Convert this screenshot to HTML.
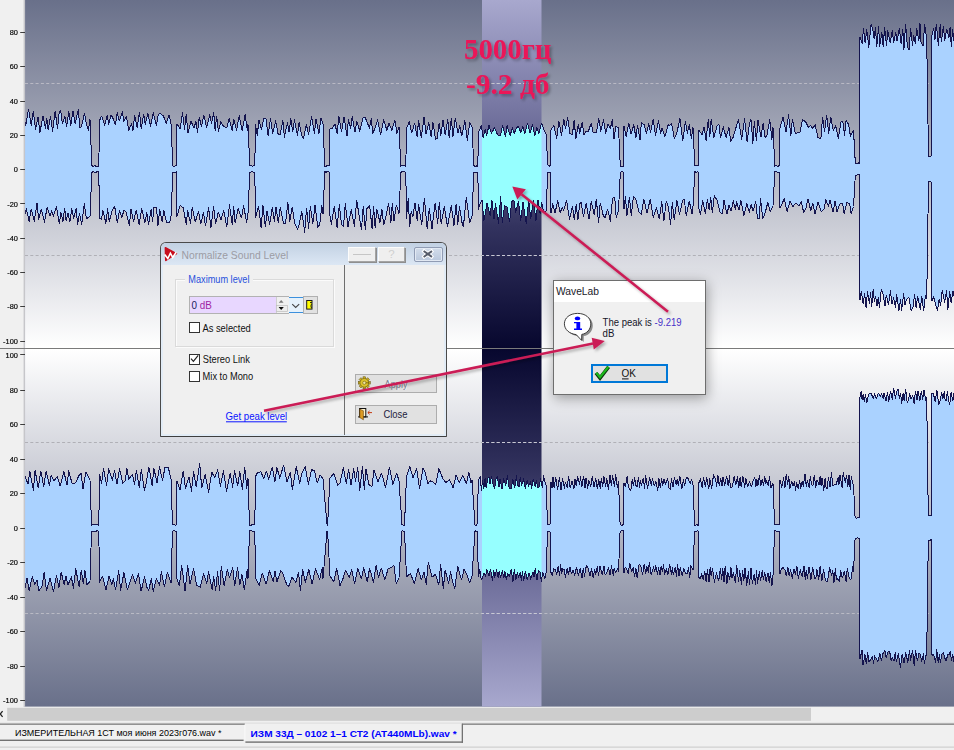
<!DOCTYPE html>
<html lang="ru">
<head>
<meta charset="utf-8">
<title>WaveLab</title>
<style>
*{box-sizing:border-box;margin:0;padding:0}
html,body{width:954px;height:750px;overflow:hidden;background:#f0f0f0}
body{position:relative;font-family:"Liberation Sans",sans-serif;font-size:11px;color:#000}
svg{position:absolute;left:0;top:0;overflow:visible}
svg text{font-family:"Liberation Sans",sans-serif;white-space:pre}
.abs{position:absolute}
#sbtrack{left:0;top:707px;width:954px;height:16px;background:#f0f0f0}
#sbthumb{left:10px;top:709px;width:801px;height:13px;background:#cdcdcd}
#tabbar{left:0;top:722px;width:954px;height:28px;background:#f0f0f0}
#tabline{left:0;top:722px;width:954px;height:2px;background:linear-gradient(#b4b4b4,#6e6e6e)}
#tab1{left:0;top:724px;width:243px;height:21px;border-bottom:2px solid #8a8a8a;border-right:1px solid #8a8a8a;background:#f0f0f0}
#tab2{left:245px;top:724px;width:218px;height:23px;border-bottom:2px solid #8a8a8a;border-right:2px solid #8a8a8a;border-left:1px solid #fff;background:#f0f0f0}
#botline{left:0;top:748px;width:954px;height:1px;background:#c8c8c8}
#dlg{left:160px;top:242px;width:287px;height:195px;border:1px solid #4a4a4a;border-bottom-color:#3e3e3e;border-radius:6px 6px 1px 1px;background:#e2ecf6}
#dlg .title{left:0;top:0;width:285px;height:22px;background:linear-gradient(#c2d1e3,#dce7f4);border-radius:5px 5px 0 0}
#dlg .body{left:2px;top:22px;width:281px;height:169px;background:#f0f0f0}
.tbtn{top:4px;height:15px;background:#efefef;border:1px solid;border-color:#fcfcfc #a4a4a4 #a4a4a4 #fcfcfc;box-shadow:1px 1px 0 #8e8e8e}
.grp{left:14px;top:36px;width:159px;height:68px;border:1px solid #dadada;box-shadow:1px 1px 0 #fbfbfb, inset 1px 1px 0 #fbfbfb}
.cb{width:11px;height:11px;border:1px solid #333;background:#fff}
.btn{background:#e1e1e1;border:1px solid #adadad}
</style>
</head>
<body>
<svg id="wave" width="954" height="750" viewBox="0 0 954 750">
<defs>
<linearGradient id="gT" x1="0" y1="0" x2="0" y2="1"><stop offset="0" stop-color="#69708a"/><stop offset="0.5" stop-color="#b4b7c4"/><stop offset="1" stop-color="#ffffff"/></linearGradient>
<linearGradient id="gB" x1="0" y1="0" x2="0" y2="1"><stop offset="0" stop-color="#ffffff"/><stop offset="0.5" stop-color="#b4b7c4"/><stop offset="1" stop-color="#69708a"/></linearGradient>
<linearGradient id="sT" x1="0" y1="0" x2="0" y2="1"><stop offset="0" stop-color="#a8a8ce"/><stop offset="0.35" stop-color="#70709c"/><stop offset="0.65" stop-color="#33335f"/><stop offset="1" stop-color="#07072e"/></linearGradient>
<linearGradient id="sB" x1="0" y1="0" x2="0" y2="1"><stop offset="0" stop-color="#07072e"/><stop offset="0.35" stop-color="#33335f"/><stop offset="0.65" stop-color="#70709c"/><stop offset="1" stop-color="#a8a8ce"/></linearGradient>
<clipPath id="cSel"><rect x="482" y="0" width="59.5" height="708"/></clipPath>
<clipPath id="cArea"><rect x="25" y="0" width="929" height="708"/></clipPath>
</defs>
<rect x="25" y="0" width="929" height="348" fill="url(#gT)"/>
<rect x="25" y="349" width="929" height="357.6" fill="url(#gB)"/>
<rect x="482" y="0" width="59.5" height="348" fill="url(#sT)"/>
<rect x="482" y="349" width="59.5" height="357.6" fill="url(#sB)"/>
<line x1="25" x2="954" y1="83.5" y2="83.5" stroke="#bcbcc6" stroke-width="1" stroke-dasharray="3 2.3" opacity="0.95"/>
<line x1="25" x2="954" y1="83.5" y2="83.5" stroke="#c8c8d4" stroke-width="1" stroke-dasharray="3 2.3" clip-path="url(#cSel)"/>
<line x1="25" x2="954" y1="255.5" y2="255.5" stroke="#aeaeb4" stroke-width="1" stroke-dasharray="3 2.3" opacity="0.95"/>
<line x1="25" x2="954" y1="255.5" y2="255.5" stroke="#c8c8d4" stroke-width="1" stroke-dasharray="3 2.3" clip-path="url(#cSel)"/>
<line x1="25" x2="954" y1="442.5" y2="442.5" stroke="#aeaeb4" stroke-width="1" stroke-dasharray="3 2.3" opacity="0.95"/>
<line x1="25" x2="954" y1="442.5" y2="442.5" stroke="#c8c8d4" stroke-width="1" stroke-dasharray="3 2.3" clip-path="url(#cSel)"/>
<line x1="25" x2="954" y1="613.5" y2="613.5" stroke="#bcbcc6" stroke-width="1" stroke-dasharray="3 2.3" opacity="0.95"/>
<line x1="25" x2="954" y1="613.5" y2="613.5" stroke="#c8c8d4" stroke-width="1" stroke-dasharray="3 2.3" clip-path="url(#cSel)"/>
<g clip-path="url(#cArea)">
<path d="M19.0 118.7 L21.9 123.9 L23.5 112.1 L25.6 126.0 L28.5 109.3 L31.3 125.2 L33.3 111.2 L35.6 129.6 L38.0 116.9 L39.9 132.5 L43.0 115.8 L45.4 128.5 L46.8 118.4 L48.2 130.1 L50.5 116.1 L52.6 131.7 L55.1 111.1 L57.6 128.8 L59.0 113.9 L60.7 110.0 L62.4 123.8 L64.9 116.8 L66.6 126.4 L68.8 111.4 L70.7 125.6 L73.0 111.3 L75.2 123.7 L78.3 109.5 L79.8 127.8 L81.4 126.8 L84.5 113.2 L86.5 124.6 L88.4 130.6 L90.0 119.3 L91.8 165.5 L93.2 166.7 L94.6 165.1 L96.0 166.3 L97.4 166.8 L98.8 166.0 L99.5 120.6 L101.6 116.1 L104.8 125.1 L107.2 115.6 L108.7 124.4 L111.0 114.7 L112.9 118.2 L115.5 124.9 L117.2 112.1 L119.3 121.0 L122.3 111.7 L123.9 121.3 L126.5 116.4 L128.7 130.7 L131.4 123.6 L133.0 130.5 L134.6 115.6 L137.2 127.5 L139.5 112.2 L141.2 128.6 L143.7 114.1 L145.2 124.8 L147.8 113.5 L150.6 126.2 L153.3 112.7 L156.4 125.7 L158.3 114.3 L160.5 113.7 L163.4 115.9 L166.2 123.5 L169.1 114.8 L171.0 123.4 L172.8 165.8 L174.2 166.4 L175.6 165.5 L176.3 165.9 L177.0 124.0 L180.2 128.8 L182.5 112.7 L184.6 129.3 L186.1 114.7 L188.0 132.6 L191.0 121.5 L194.1 127.9 L195.9 121.4 L197.5 132.8 L199.2 117.2 L201.5 126.5 L203.9 115.1 L206.6 127.7 L209.7 114.9 L211.5 123.7 L213.7 112.3 L215.1 130.5 L216.7 116.1 L218.4 131.9 L220.8 121.6 L223.7 126.6 L226.8 127.7 L229.1 118.3 L232.1 130.3 L233.8 119.6 L236.7 130.1 L239.2 115.6 L242.2 130.4 L245.2 114.5 L247.4 130.9 L248.0 124.2 L249.8 165.7 L251.2 165.8 L252.6 166.5 L254.0 165.1 L254.8 165.8 L255.5 124.4 L257.3 135.3 L258.9 119.9 L261.4 129.6 L263.8 118.0 L266.0 118.6 L268.1 136.0 L270.5 118.3 L272.6 133.6 L275.7 120.9 L278.1 134.0 L280.1 134.5 L282.9 120.3 L284.4 137.1 L287.5 122.3 L289.1 132.2 L290.8 118.5 L292.8 131.7 L294.4 119.7 L297.4 135.4 L299.1 122.6 L301.7 135.6 L303.6 138.3 L306.3 124.4 L308.6 134.2 L311.6 116.8 L314.4 133.1 L316.0 119.0 L318.9 134.1 L320.9 118.1 L323.0 123.9 L324.8 166.5 L326.2 166.4 L327.6 165.2 L329.3 165.9 L330.0 128.9 L332.0 129.0 L335.0 123.7 L337.2 134.1 L338.8 116.0 L341.6 131.8 L344.1 117.0 L347.0 136.1 L348.4 119.9 L350.8 128.2 L352.2 116.0 L354.9 132.1 L356.9 121.4 L359.8 131.1 L363.0 117.7 L365.2 117.7 L366.8 121.1 L369.3 128.2 L371.2 118.7 L372.9 133.4 L375.2 127.6 L377.6 119.7 L380.6 134.4 L383.8 119.9 L386.9 130.4 L389.0 123.2 L391.8 130.3 L394.9 120.0 L397.0 133.5 L399.0 126.9 L400.8 166.3 L402.2 165.5 L403.6 165.8 L405.0 166.0 L405.8 166.4 L406.5 128.6 L409.2 121.6 L411.7 133.0 L414.7 123.2 L417.1 136.6 L418.6 120.2 L421.2 137.5 L424.1 116.9 L426.0 134.3 L428.8 122.7 L431.2 137.1 L433.0 122.5 L435.5 139.1 L437.1 138.9 L439.2 123.0 L440.9 135.2 L443.0 119.9 L445.1 134.9 L447.8 119.3 L449.2 137.8 L451.3 118.7 L453.0 136.5 L455.3 118.0 L458.0 133.1 L459.7 125.7 L461.7 136.0 L464.9 120.7 L467.3 140.6 L469.8 122.7 L472.0 127.1 L473.8 165.4 L475.2 166.6 L476.6 165.9 L477.8 166.4 L478.5 132.3 L481.4 125.5 L483.1 137.3 L485.2 129.4 L486.7 135.5 L489.0 125.2 L491.4 133.5 L494.5 127.5 L497.6 135.0 L500.6 135.3 L502.6 125.2 L505.5 137.0 L507.1 125.7 L510.1 135.4 L512.5 127.7 L514.1 133.6 L516.5 128.2 L518.2 126.0 L520.9 132.6 L522.9 126.2 L524.6 133.9 L527.6 123.3 L530.0 133.0 L532.6 124.7 L534.7 135.8 L536.9 127.3 L538.7 133.9 L541.6 123.3 L544.6 131.6 L546.0 133.6 L547.8 164.8 L549.2 166.4 L550.3 165.1 L551.0 129.6 L553.8 125.7 L556.8 138.2 L558.9 121.3 L561.5 135.2 L563.8 119.2 L565.5 128.9 L567.7 117.5 L569.9 133.3 L572.4 134.7 L574.1 120.5 L575.9 138.2 L578.3 124.2 L579.8 133.2 L582.2 121.9 L583.9 135.0 L586.0 131.3 L588.3 131.5 L591.1 123.4 L593.2 132.7 L596.4 132.8 L598.8 118.8 L600.8 131.4 L603.4 119.9 L605.8 133.3 L607.9 124.1 L610.3 128.9 L612.3 119.4 L614.0 138.7 L615.9 126.5 L618.5 127.4 L620.3 166.2 L621.7 166.3 L623.3 166.3 L624.0 126.0 L626.2 136.5 L628.8 123.4 L631.1 134.1 L633.8 124.9 L635.9 138.1 L637.5 125.1 L640.0 140.1 L641.4 122.3 L644.4 125.0 L646.4 133.9 L648.7 123.5 L650.5 132.8 L653.2 119.1 L655.5 135.8 L658.5 120.5 L660.6 133.2 L662.1 128.0 L665.0 136.5 L668.0 124.8 L669.5 125.5 L671.7 123.9 L674.3 138.7 L676.8 133.4 L679.9 118.4 L682.7 140.8 L685.5 121.1 L687.3 133.3 L689.3 124.6 L691.4 138.8 L693.0 127.4 L694.8 165.5 L696.2 165.2 L697.6 165.0 L698.3 165.7 L699.0 130.2 L702.0 134.9 L704.1 126.9 L706.1 140.4 L708.2 119.8 L709.8 136.7 L711.2 119.0 L713.9 137.7 L717.1 125.4 L719.0 124.8 L720.4 138.0 L723.3 126.9 L726.1 137.7 L728.9 127.7 L730.8 141.5 L733.2 137.1 L735.5 129.2 L738.5 119.5 L741.7 139.6 L744.6 118.8 L747.1 141.9 L749.3 124.5 L751.0 119.4 L752.9 143.3 L754.3 121.7 L756.4 140.4 L758.0 120.2 L761.0 137.3 L763.1 123.0 L765.1 138.0 L767.1 134.5 L769.8 119.6 L771.9 139.2 L773.0 127.2 L774.8 166.2 L776.2 165.2 L777.6 166.4 L779.3 165.7 L780.0 128.0 L783.0 117.0 L786.0 131.9 L788.6 114.7 L790.8 135.8 L792.4 119.3 L795.3 133.6 L798.4 132.3 L799.9 132.9 L802.4 119.9 L805.6 121.6 L808.6 127.7 L810.5 125.5 L812.8 128.3 L815.1 124.7 L817.9 137.4 L820.9 138.7 L822.6 117.0 L824.5 131.5 L826.7 115.2 L828.7 133.7 L830.8 117.2 L833.3 130.7 L835.8 125.9 L838.3 138.3 L841.0 121.9 L842.9 121.8 L844.5 135.5 L846.1 120.1 L848.7 124.6 L850.4 136.2 L853.5 130.2 L855.3 162.6 L856.7 164.0 L858.1 162.8 L859.3 163.5 L860.0 37.3 L862.3 43.5 L863.5 28.1 L865.1 42.3 L866.8 29.8 L868.8 47.3 L871.1 24.0 L872.8 29.0 L874.2 39.1 L875.4 27.8 L876.8 46.3 L878.6 26.3 L879.7 46.5 L881.9 32.3 L883.2 46.7 L884.6 27.5 L886.5 45.7 L887.8 30.6 L890.1 42.6 L892.4 30.2 L893.5 42.9 L895.8 32.9 L897.1 41.0 L899.4 28.0 L901.1 44.0 L902.8 29.1 L903.9 49.4 L905.6 24.2 L907.3 46.0 L909.0 49.9 L910.6 28.9 L912.5 45.2 L913.7 35.3 L915.4 43.9 L916.6 28.1 L918.9 40.4 L920.0 23.3 L921.1 43.2 L923.3 45.9 L924.5 24.3 L926.7 37.8 L928.5 156.3 L929.9 156.4 L931.3 155.8 L932.0 35.4 L933.7 28.2 L934.9 40.0 L936.3 24.0 L938.4 45.3 L940.2 24.8 L941.3 42.0 L943.4 26.2 L944.7 40.2 L946.7 29.0 L948.9 37.6 L950.1 27.6 L951.3 46.6 L952.6 29.4 L954.4 43.5 L955.8 26.2 L957.4 39.8 L959.0 24.1 L961.0 43.4 L962.0 35.6 L962.0 302.0 L960.9 291.2 L959.3 306.7 L956.8 304.9 L954.4 298.2 L953.0 291.1 L951.1 302.7 L949.7 291.1 L947.8 309.7 L946.6 290.8 L944.6 302.2 L942.2 289.9 L940.6 305.8 L939.2 299.1 L937.5 310.2 L935.5 304.3 L933.6 296.9 L932.0 301.3 L931.3 182.0 L929.9 181.2 L928.5 182.0 L926.7 299.0 L925.4 295.8 L923.7 311.0 L921.8 296.0 L920.2 309.4 L917.7 296.1 L916.1 307.8 L914.6 294.7 L913.0 306.8 L911.1 310.7 L908.9 297.3 L906.7 299.1 L905.0 304.6 L903.6 293.7 L901.6 310.3 L900.5 299.4 L898.9 310.8 L896.7 294.7 L895.4 307.6 L893.6 297.3 L891.9 304.0 L890.4 290.8 L888.5 304.6 L886.3 295.0 L885.0 305.7 L882.9 293.0 L881.3 289.6 L879.4 307.5 L878.2 297.8 L877.0 306.0 L875.6 296.2 L874.4 301.6 L873.1 289.7 L871.7 307.0 L870.6 292.8 L869.4 303.1 L867.5 292.0 L866.1 307.5 L864.7 293.7 L863.1 303.4 L861.3 291.2 L860.0 299.7 L859.3 174.8 L858.1 174.3 L856.7 175.1 L855.3 175.6 L853.5 206.5 L851.2 213.8 L849.7 203.7 L846.9 202.6 L844.1 213.7 L842.6 203.1 L840.0 203.8 L837.0 211.6 L835.1 200.8 L833.1 211.8 L830.0 199.8 L828.6 206.1 L825.7 199.8 L824.1 208.7 L821.2 211.8 L818.1 202.1 L815.1 213.9 L812.9 203.2 L810.7 210.6 L808.0 198.7 L805.9 208.3 L803.7 212.6 L801.2 201.3 L799.1 206.2 L796.1 202.8 L793.0 206.4 L790.1 201.2 L787.1 211.5 L784.2 198.8 L781.9 203.9 L780.0 207.6 L779.3 172.3 L777.6 172.9 L776.2 171.0 L774.8 171.7 L773.0 205.8 L770.1 211.6 L767.8 202.3 L765.1 213.2 L762.8 218.5 L760.5 198.7 L759.1 218.7 L757.5 218.4 L755.7 201.3 L753.1 211.0 L751.2 204.8 L749.3 212.2 L746.8 203.8 L743.9 215.7 L740.9 200.1 L739.0 210.4 L736.7 201.7 L735.3 209.6 L733.3 200.6 L731.1 211.1 L729.0 205.4 L726.9 214.1 L724.0 199.7 L722.6 213.5 L720.1 212.6 L716.9 199.9 L714.3 195.8 L712.3 212.7 L710.8 197.4 L709.1 209.9 L707.5 199.1 L705.3 213.3 L702.7 200.4 L700.5 214.5 L699.0 209.2 L698.3 172.2 L697.6 171.8 L696.2 172.4 L694.8 171.5 L693.0 206.6 L692.0 214.3 L689.3 201.0 L686.2 215.5 L684.3 199.5 L682.7 200.0 L679.5 214.4 L676.9 200.4 L674.2 220.1 L672.3 202.2 L670.6 224.5 L668.3 206.6 L666.2 201.3 L663.9 221.1 L661.8 201.9 L659.3 218.5 L656.3 207.7 L653.3 217.5 L650.2 199.4 L647.0 213.1 L643.9 199.3 L641.3 214.1 L638.9 212.1 L636.1 199.9 L633.5 196.1 L631.3 215.5 L629.4 197.3 L627.0 215.5 L625.4 196.3 L624.0 209.1 L623.3 172.0 L621.7 171.4 L620.3 172.7 L618.5 210.1 L616.2 217.3 L614.7 197.0 L612.5 198.4 L610.4 221.1 L607.6 209.5 L605.1 217.5 L603.3 215.7 L600.2 203.0 L598.6 222.8 L596.3 199.2 L594.3 214.9 L591.2 201.4 L589.0 218.9 L586.1 203.4 L583.5 216.6 L581.1 202.7 L579.7 203.7 L577.9 219.6 L576.2 204.7 L574.2 219.9 L572.5 206.2 L569.5 219.7 L566.6 200.2 L563.6 210.7 L562.2 207.6 L560.2 212.5 L557.7 200.9 L555.0 213.1 L552.8 203.7 L551.0 213.2 L550.3 172.8 L549.2 172.8 L547.8 172.0 L546.0 211.6 L543.6 211.3 L541.6 202.4 L540.1 213.3 L538.0 200.0 L536.0 220.5 L533.4 200.5 L530.8 218.7 L528.7 200.4 L526.2 223.3 L523.0 202.4 L520.7 220.9 L518.5 201.1 L515.7 212.7 L513.9 199.9 L511.6 201.7 L509.6 221.7 L507.0 207.2 L504.6 205.8 L502.3 222.3 L500.7 196.3 L498.5 223.4 L495.4 203.5 L494.0 218.9 L491.9 200.3 L490.2 215.6 L487.0 203.1 L483.9 221.0 L482.0 200.3 L480.4 202.8 L478.5 209.1 L477.8 172.4 L476.6 172.2 L475.2 172.1 L473.8 172.6 L472.0 216.6 L469.7 222.6 L468.1 210.8 L466.3 197.2 L463.4 226.8 L461.9 222.2 L459.5 206.2 L457.8 224.3 L456.1 204.6 L454.0 225.6 L451.3 205.8 L448.8 219.0 L447.4 227.0 L444.4 206.5 L441.2 223.4 L439.3 202.3 L437.7 223.1 L435.1 203.3 L432.0 228.9 L429.3 208.6 L427.2 228.9 L424.4 198.4 L421.7 224.9 L418.6 204.1 L417.2 220.9 L415.0 202.6 L412.9 217.0 L411.2 211.3 L409.7 226.7 L408.2 198.7 L406.5 218.1 L405.8 172.3 L405.0 171.9 L403.6 171.4 L402.2 171.1 L400.8 172.6 L399.0 213.4 L396.3 205.2 L394.0 221.1 L392.3 203.0 L390.9 222.3 L388.6 203.4 L385.4 218.6 L383.7 224.8 L381.9 209.4 L380.0 222.6 L376.9 209.5 L375.1 227.4 L373.6 206.6 L372.1 228.3 L369.6 205.7 L366.8 208.9 L365.4 229.6 L363.2 206.2 L361.5 229.6 L358.4 210.9 L356.7 200.2 L354.4 226.4 L351.2 209.7 L348.0 226.7 L345.3 203.8 L343.5 226.1 L341.6 224.7 L339.3 204.8 L337.1 227.7 L334.3 206.0 L331.4 224.1 L330.0 215.5 L329.3 172.3 L327.6 171.1 L326.2 172.4 L324.8 171.7 L323.0 214.2 L321.8 205.5 L319.7 224.7 L317.8 227.2 L315.0 205.2 L312.8 223.8 L310.3 206.2 L308.6 228.1 L306.6 208.0 L304.7 232.2 L301.8 211.7 L299.2 224.3 L297.7 229.2 L294.7 223.2 L292.2 207.2 L289.8 221.8 L287.8 202.2 L285.6 223.0 L283.4 223.4 L280.3 207.1 L278.3 222.4 L276.0 206.7 L274.4 221.6 L272.3 207.3 L269.7 224.5 L267.0 211.3 L265.4 226.9 L263.0 205.5 L261.1 227.6 L258.6 206.2 L255.5 217.5 L254.8 172.0 L254.0 172.5 L252.6 171.6 L251.2 171.8 L249.8 172.3 L248.0 213.6 L246.6 222.7 L243.7 205.9 L241.4 217.7 L238.2 208.6 L235.1 223.1 L233.7 206.4 L232.2 224.7 L229.5 205.0 L226.8 227.0 L223.7 210.3 L221.0 219.8 L218.3 212.1 L215.5 224.0 L213.6 206.4 L210.9 227.6 L208.6 208.0 L205.5 225.9 L203.5 212.4 L200.8 224.0 L198.5 211.1 L195.3 222.0 L192.2 207.5 L190.5 223.6 L187.7 210.6 L186.3 224.3 L183.2 207.9 L180.2 205.0 L177.0 216.5 L176.3 171.7 L175.6 173.0 L174.2 172.7 L172.8 172.7 L171.0 216.5 L169.7 222.8 L166.8 223.0 L163.8 210.5 L162.2 222.1 L159.7 209.5 L158.0 225.6 L156.4 207.4 L154.0 207.4 L152.6 221.4 L151.1 209.1 L148.5 224.8 L146.9 212.8 L144.9 222.8 L141.8 208.6 L139.2 224.3 L136.1 210.2 L133.6 221.9 L131.0 209.3 L129.3 225.5 L126.1 211.9 L124.0 210.0 L121.8 217.9 L119.6 210.4 L117.3 222.6 L114.7 206.6 L112.1 210.6 L109.2 221.7 L107.6 208.9 L105.9 223.4 L102.9 210.1 L101.5 219.3 L99.5 218.0 L98.8 171.5 L97.4 171.1 L96.0 172.8 L94.6 172.9 L93.2 171.1 L91.8 172.7 L90.0 216.3 L86.4 218.9 L84.3 203.3 L81.7 224.8 L79.4 213.1 L77.6 224.7 L76.2 207.9 L73.6 218.6 L71.8 208.6 L69.8 222.0 L67.9 212.9 L66.1 220.8 L64.6 208.0 L62.9 221.7 L60.9 212.1 L59.3 223.9 L56.4 206.4 L53.4 216.3 L51.6 210.7 L50.1 216.1 L47.1 207.4 L44.5 222.2 L41.3 209.5 L38.7 219.3 L37.0 203.0 L34.3 221.3 L31.2 208.9 L29.2 221.4 L26.4 208.9 L23.7 219.4 L22.1 207.0 L19.0 214.6Z" fill="#aad2ff"/>
<path d="M19.0 118.7 L21.9 123.9 L23.5 112.1 L25.6 126.0 L28.5 109.3 L31.3 125.2 L33.3 111.2 L35.6 129.6 L38.0 116.9 L39.9 132.5 L43.0 115.8 L45.4 128.5 L46.8 118.4 L48.2 130.1 L50.5 116.1 L52.6 131.7 L55.1 111.1 L57.6 128.8 L59.0 113.9 L60.7 110.0 L62.4 123.8 L64.9 116.8 L66.6 126.4 L68.8 111.4 L70.7 125.6 L73.0 111.3 L75.2 123.7 L78.3 109.5 L79.8 127.8 L81.4 126.8 L84.5 113.2 L86.5 124.6 L88.4 130.6 L90.0 119.3 L91.8 165.5 L93.2 166.7 L94.6 165.1 L96.0 166.3 L97.4 166.8 L98.8 166.0 L99.5 120.6 L101.6 116.1 L104.8 125.1 L107.2 115.6 L108.7 124.4 L111.0 114.7 L112.9 118.2 L115.5 124.9 L117.2 112.1 L119.3 121.0 L122.3 111.7 L123.9 121.3 L126.5 116.4 L128.7 130.7 L131.4 123.6 L133.0 130.5 L134.6 115.6 L137.2 127.5 L139.5 112.2 L141.2 128.6 L143.7 114.1 L145.2 124.8 L147.8 113.5 L150.6 126.2 L153.3 112.7 L156.4 125.7 L158.3 114.3 L160.5 113.7 L163.4 115.9 L166.2 123.5 L169.1 114.8 L171.0 123.4 L172.8 165.8 L174.2 166.4 L175.6 165.5 L176.3 165.9 L177.0 124.0 L180.2 128.8 L182.5 112.7 L184.6 129.3 L186.1 114.7 L188.0 132.6 L191.0 121.5 L194.1 127.9 L195.9 121.4 L197.5 132.8 L199.2 117.2 L201.5 126.5 L203.9 115.1 L206.6 127.7 L209.7 114.9 L211.5 123.7 L213.7 112.3 L215.1 130.5 L216.7 116.1 L218.4 131.9 L220.8 121.6 L223.7 126.6 L226.8 127.7 L229.1 118.3 L232.1 130.3 L233.8 119.6 L236.7 130.1 L239.2 115.6 L242.2 130.4 L245.2 114.5 L247.4 130.9 L248.0 124.2 L249.8 165.7 L251.2 165.8 L252.6 166.5 L254.0 165.1 L254.8 165.8 L255.5 124.4 L257.3 135.3 L258.9 119.9 L261.4 129.6 L263.8 118.0 L266.0 118.6 L268.1 136.0 L270.5 118.3 L272.6 133.6 L275.7 120.9 L278.1 134.0 L280.1 134.5 L282.9 120.3 L284.4 137.1 L287.5 122.3 L289.1 132.2 L290.8 118.5 L292.8 131.7 L294.4 119.7 L297.4 135.4 L299.1 122.6 L301.7 135.6 L303.6 138.3 L306.3 124.4 L308.6 134.2 L311.6 116.8 L314.4 133.1 L316.0 119.0 L318.9 134.1 L320.9 118.1 L323.0 123.9 L324.8 166.5 L326.2 166.4 L327.6 165.2 L329.3 165.9 L330.0 128.9 L332.0 129.0 L335.0 123.7 L337.2 134.1 L338.8 116.0 L341.6 131.8 L344.1 117.0 L347.0 136.1 L348.4 119.9 L350.8 128.2 L352.2 116.0 L354.9 132.1 L356.9 121.4 L359.8 131.1 L363.0 117.7 L365.2 117.7 L366.8 121.1 L369.3 128.2 L371.2 118.7 L372.9 133.4 L375.2 127.6 L377.6 119.7 L380.6 134.4 L383.8 119.9 L386.9 130.4 L389.0 123.2 L391.8 130.3 L394.9 120.0 L397.0 133.5 L399.0 126.9 L400.8 166.3 L402.2 165.5 L403.6 165.8 L405.0 166.0 L405.8 166.4 L406.5 128.6 L409.2 121.6 L411.7 133.0 L414.7 123.2 L417.1 136.6 L418.6 120.2 L421.2 137.5 L424.1 116.9 L426.0 134.3 L428.8 122.7 L431.2 137.1 L433.0 122.5 L435.5 139.1 L437.1 138.9 L439.2 123.0 L440.9 135.2 L443.0 119.9 L445.1 134.9 L447.8 119.3 L449.2 137.8 L451.3 118.7 L453.0 136.5 L455.3 118.0 L458.0 133.1 L459.7 125.7 L461.7 136.0 L464.9 120.7 L467.3 140.6 L469.8 122.7 L472.0 127.1 L473.8 165.4 L475.2 166.6 L476.6 165.9 L477.8 166.4 L478.5 132.3 L481.4 125.5 L483.1 137.3 L485.2 129.4 L486.7 135.5 L489.0 125.2 L491.4 133.5 L494.5 127.5 L497.6 135.0 L500.6 135.3 L502.6 125.2 L505.5 137.0 L507.1 125.7 L510.1 135.4 L512.5 127.7 L514.1 133.6 L516.5 128.2 L518.2 126.0 L520.9 132.6 L522.9 126.2 L524.6 133.9 L527.6 123.3 L530.0 133.0 L532.6 124.7 L534.7 135.8 L536.9 127.3 L538.7 133.9 L541.6 123.3 L544.6 131.6 L546.0 133.6 L547.8 164.8 L549.2 166.4 L550.3 165.1 L551.0 129.6 L553.8 125.7 L556.8 138.2 L558.9 121.3 L561.5 135.2 L563.8 119.2 L565.5 128.9 L567.7 117.5 L569.9 133.3 L572.4 134.7 L574.1 120.5 L575.9 138.2 L578.3 124.2 L579.8 133.2 L582.2 121.9 L583.9 135.0 L586.0 131.3 L588.3 131.5 L591.1 123.4 L593.2 132.7 L596.4 132.8 L598.8 118.8 L600.8 131.4 L603.4 119.9 L605.8 133.3 L607.9 124.1 L610.3 128.9 L612.3 119.4 L614.0 138.7 L615.9 126.5 L618.5 127.4 L620.3 166.2 L621.7 166.3 L623.3 166.3 L624.0 126.0 L626.2 136.5 L628.8 123.4 L631.1 134.1 L633.8 124.9 L635.9 138.1 L637.5 125.1 L640.0 140.1 L641.4 122.3 L644.4 125.0 L646.4 133.9 L648.7 123.5 L650.5 132.8 L653.2 119.1 L655.5 135.8 L658.5 120.5 L660.6 133.2 L662.1 128.0 L665.0 136.5 L668.0 124.8 L669.5 125.5 L671.7 123.9 L674.3 138.7 L676.8 133.4 L679.9 118.4 L682.7 140.8 L685.5 121.1 L687.3 133.3 L689.3 124.6 L691.4 138.8 L693.0 127.4 L694.8 165.5 L696.2 165.2 L697.6 165.0 L698.3 165.7 L699.0 130.2 L702.0 134.9 L704.1 126.9 L706.1 140.4 L708.2 119.8 L709.8 136.7 L711.2 119.0 L713.9 137.7 L717.1 125.4 L719.0 124.8 L720.4 138.0 L723.3 126.9 L726.1 137.7 L728.9 127.7 L730.8 141.5 L733.2 137.1 L735.5 129.2 L738.5 119.5 L741.7 139.6 L744.6 118.8 L747.1 141.9 L749.3 124.5 L751.0 119.4 L752.9 143.3 L754.3 121.7 L756.4 140.4 L758.0 120.2 L761.0 137.3 L763.1 123.0 L765.1 138.0 L767.1 134.5 L769.8 119.6 L771.9 139.2 L773.0 127.2 L774.8 166.2 L776.2 165.2 L777.6 166.4 L779.3 165.7 L780.0 128.0 L783.0 117.0 L786.0 131.9 L788.6 114.7 L790.8 135.8 L792.4 119.3 L795.3 133.6 L798.4 132.3 L799.9 132.9 L802.4 119.9 L805.6 121.6 L808.6 127.7 L810.5 125.5 L812.8 128.3 L815.1 124.7 L817.9 137.4 L820.9 138.7 L822.6 117.0 L824.5 131.5 L826.7 115.2 L828.7 133.7 L830.8 117.2 L833.3 130.7 L835.8 125.9 L838.3 138.3 L841.0 121.9 L842.9 121.8 L844.5 135.5 L846.1 120.1 L848.7 124.6 L850.4 136.2 L853.5 130.2 L855.3 162.6 L856.7 164.0 L858.1 162.8 L859.3 163.5 L860.0 37.3 L862.3 43.5 L863.5 28.1 L865.1 42.3 L866.8 29.8 L868.8 47.3 L871.1 24.0 L872.8 29.0 L874.2 39.1 L875.4 27.8 L876.8 46.3 L878.6 26.3 L879.7 46.5 L881.9 32.3 L883.2 46.7 L884.6 27.5 L886.5 45.7 L887.8 30.6 L890.1 42.6 L892.4 30.2 L893.5 42.9 L895.8 32.9 L897.1 41.0 L899.4 28.0 L901.1 44.0 L902.8 29.1 L903.9 49.4 L905.6 24.2 L907.3 46.0 L909.0 49.9 L910.6 28.9 L912.5 45.2 L913.7 35.3 L915.4 43.9 L916.6 28.1 L918.9 40.4 L920.0 23.3 L921.1 43.2 L923.3 45.9 L924.5 24.3 L926.7 37.8 L928.5 156.3 L929.9 156.4 L931.3 155.8 L932.0 35.4 L933.7 28.2 L934.9 40.0 L936.3 24.0 L938.4 45.3 L940.2 24.8 L941.3 42.0 L943.4 26.2 L944.7 40.2 L946.7 29.0 L948.9 37.6 L950.1 27.6 L951.3 46.6 L952.6 29.4 L954.4 43.5 L955.8 26.2 L957.4 39.8 L959.0 24.1 L961.0 43.4 L962.0 35.6 L962.0 302.0 L960.9 291.2 L959.3 306.7 L956.8 304.9 L954.4 298.2 L953.0 291.1 L951.1 302.7 L949.7 291.1 L947.8 309.7 L946.6 290.8 L944.6 302.2 L942.2 289.9 L940.6 305.8 L939.2 299.1 L937.5 310.2 L935.5 304.3 L933.6 296.9 L932.0 301.3 L931.3 182.0 L929.9 181.2 L928.5 182.0 L926.7 299.0 L925.4 295.8 L923.7 311.0 L921.8 296.0 L920.2 309.4 L917.7 296.1 L916.1 307.8 L914.6 294.7 L913.0 306.8 L911.1 310.7 L908.9 297.3 L906.7 299.1 L905.0 304.6 L903.6 293.7 L901.6 310.3 L900.5 299.4 L898.9 310.8 L896.7 294.7 L895.4 307.6 L893.6 297.3 L891.9 304.0 L890.4 290.8 L888.5 304.6 L886.3 295.0 L885.0 305.7 L882.9 293.0 L881.3 289.6 L879.4 307.5 L878.2 297.8 L877.0 306.0 L875.6 296.2 L874.4 301.6 L873.1 289.7 L871.7 307.0 L870.6 292.8 L869.4 303.1 L867.5 292.0 L866.1 307.5 L864.7 293.7 L863.1 303.4 L861.3 291.2 L860.0 299.7 L859.3 174.8 L858.1 174.3 L856.7 175.1 L855.3 175.6 L853.5 206.5 L851.2 213.8 L849.7 203.7 L846.9 202.6 L844.1 213.7 L842.6 203.1 L840.0 203.8 L837.0 211.6 L835.1 200.8 L833.1 211.8 L830.0 199.8 L828.6 206.1 L825.7 199.8 L824.1 208.7 L821.2 211.8 L818.1 202.1 L815.1 213.9 L812.9 203.2 L810.7 210.6 L808.0 198.7 L805.9 208.3 L803.7 212.6 L801.2 201.3 L799.1 206.2 L796.1 202.8 L793.0 206.4 L790.1 201.2 L787.1 211.5 L784.2 198.8 L781.9 203.9 L780.0 207.6 L779.3 172.3 L777.6 172.9 L776.2 171.0 L774.8 171.7 L773.0 205.8 L770.1 211.6 L767.8 202.3 L765.1 213.2 L762.8 218.5 L760.5 198.7 L759.1 218.7 L757.5 218.4 L755.7 201.3 L753.1 211.0 L751.2 204.8 L749.3 212.2 L746.8 203.8 L743.9 215.7 L740.9 200.1 L739.0 210.4 L736.7 201.7 L735.3 209.6 L733.3 200.6 L731.1 211.1 L729.0 205.4 L726.9 214.1 L724.0 199.7 L722.6 213.5 L720.1 212.6 L716.9 199.9 L714.3 195.8 L712.3 212.7 L710.8 197.4 L709.1 209.9 L707.5 199.1 L705.3 213.3 L702.7 200.4 L700.5 214.5 L699.0 209.2 L698.3 172.2 L697.6 171.8 L696.2 172.4 L694.8 171.5 L693.0 206.6 L692.0 214.3 L689.3 201.0 L686.2 215.5 L684.3 199.5 L682.7 200.0 L679.5 214.4 L676.9 200.4 L674.2 220.1 L672.3 202.2 L670.6 224.5 L668.3 206.6 L666.2 201.3 L663.9 221.1 L661.8 201.9 L659.3 218.5 L656.3 207.7 L653.3 217.5 L650.2 199.4 L647.0 213.1 L643.9 199.3 L641.3 214.1 L638.9 212.1 L636.1 199.9 L633.5 196.1 L631.3 215.5 L629.4 197.3 L627.0 215.5 L625.4 196.3 L624.0 209.1 L623.3 172.0 L621.7 171.4 L620.3 172.7 L618.5 210.1 L616.2 217.3 L614.7 197.0 L612.5 198.4 L610.4 221.1 L607.6 209.5 L605.1 217.5 L603.3 215.7 L600.2 203.0 L598.6 222.8 L596.3 199.2 L594.3 214.9 L591.2 201.4 L589.0 218.9 L586.1 203.4 L583.5 216.6 L581.1 202.7 L579.7 203.7 L577.9 219.6 L576.2 204.7 L574.2 219.9 L572.5 206.2 L569.5 219.7 L566.6 200.2 L563.6 210.7 L562.2 207.6 L560.2 212.5 L557.7 200.9 L555.0 213.1 L552.8 203.7 L551.0 213.2 L550.3 172.8 L549.2 172.8 L547.8 172.0 L546.0 211.6 L543.6 211.3 L541.6 202.4 L540.1 213.3 L538.0 200.0 L536.0 220.5 L533.4 200.5 L530.8 218.7 L528.7 200.4 L526.2 223.3 L523.0 202.4 L520.7 220.9 L518.5 201.1 L515.7 212.7 L513.9 199.9 L511.6 201.7 L509.6 221.7 L507.0 207.2 L504.6 205.8 L502.3 222.3 L500.7 196.3 L498.5 223.4 L495.4 203.5 L494.0 218.9 L491.9 200.3 L490.2 215.6 L487.0 203.1 L483.9 221.0 L482.0 200.3 L480.4 202.8 L478.5 209.1 L477.8 172.4 L476.6 172.2 L475.2 172.1 L473.8 172.6 L472.0 216.6 L469.7 222.6 L468.1 210.8 L466.3 197.2 L463.4 226.8 L461.9 222.2 L459.5 206.2 L457.8 224.3 L456.1 204.6 L454.0 225.6 L451.3 205.8 L448.8 219.0 L447.4 227.0 L444.4 206.5 L441.2 223.4 L439.3 202.3 L437.7 223.1 L435.1 203.3 L432.0 228.9 L429.3 208.6 L427.2 228.9 L424.4 198.4 L421.7 224.9 L418.6 204.1 L417.2 220.9 L415.0 202.6 L412.9 217.0 L411.2 211.3 L409.7 226.7 L408.2 198.7 L406.5 218.1 L405.8 172.3 L405.0 171.9 L403.6 171.4 L402.2 171.1 L400.8 172.6 L399.0 213.4 L396.3 205.2 L394.0 221.1 L392.3 203.0 L390.9 222.3 L388.6 203.4 L385.4 218.6 L383.7 224.8 L381.9 209.4 L380.0 222.6 L376.9 209.5 L375.1 227.4 L373.6 206.6 L372.1 228.3 L369.6 205.7 L366.8 208.9 L365.4 229.6 L363.2 206.2 L361.5 229.6 L358.4 210.9 L356.7 200.2 L354.4 226.4 L351.2 209.7 L348.0 226.7 L345.3 203.8 L343.5 226.1 L341.6 224.7 L339.3 204.8 L337.1 227.7 L334.3 206.0 L331.4 224.1 L330.0 215.5 L329.3 172.3 L327.6 171.1 L326.2 172.4 L324.8 171.7 L323.0 214.2 L321.8 205.5 L319.7 224.7 L317.8 227.2 L315.0 205.2 L312.8 223.8 L310.3 206.2 L308.6 228.1 L306.6 208.0 L304.7 232.2 L301.8 211.7 L299.2 224.3 L297.7 229.2 L294.7 223.2 L292.2 207.2 L289.8 221.8 L287.8 202.2 L285.6 223.0 L283.4 223.4 L280.3 207.1 L278.3 222.4 L276.0 206.7 L274.4 221.6 L272.3 207.3 L269.7 224.5 L267.0 211.3 L265.4 226.9 L263.0 205.5 L261.1 227.6 L258.6 206.2 L255.5 217.5 L254.8 172.0 L254.0 172.5 L252.6 171.6 L251.2 171.8 L249.8 172.3 L248.0 213.6 L246.6 222.7 L243.7 205.9 L241.4 217.7 L238.2 208.6 L235.1 223.1 L233.7 206.4 L232.2 224.7 L229.5 205.0 L226.8 227.0 L223.7 210.3 L221.0 219.8 L218.3 212.1 L215.5 224.0 L213.6 206.4 L210.9 227.6 L208.6 208.0 L205.5 225.9 L203.5 212.4 L200.8 224.0 L198.5 211.1 L195.3 222.0 L192.2 207.5 L190.5 223.6 L187.7 210.6 L186.3 224.3 L183.2 207.9 L180.2 205.0 L177.0 216.5 L176.3 171.7 L175.6 173.0 L174.2 172.7 L172.8 172.7 L171.0 216.5 L169.7 222.8 L166.8 223.0 L163.8 210.5 L162.2 222.1 L159.7 209.5 L158.0 225.6 L156.4 207.4 L154.0 207.4 L152.6 221.4 L151.1 209.1 L148.5 224.8 L146.9 212.8 L144.9 222.8 L141.8 208.6 L139.2 224.3 L136.1 210.2 L133.6 221.9 L131.0 209.3 L129.3 225.5 L126.1 211.9 L124.0 210.0 L121.8 217.9 L119.6 210.4 L117.3 222.6 L114.7 206.6 L112.1 210.6 L109.2 221.7 L107.6 208.9 L105.9 223.4 L102.9 210.1 L101.5 219.3 L99.5 218.0 L98.8 171.5 L97.4 171.1 L96.0 172.8 L94.6 172.9 L93.2 171.1 L91.8 172.7 L90.0 216.3 L86.4 218.9 L84.3 203.3 L81.7 224.8 L79.4 213.1 L77.6 224.7 L76.2 207.9 L73.6 218.6 L71.8 208.6 L69.8 222.0 L67.9 212.9 L66.1 220.8 L64.6 208.0 L62.9 221.7 L60.9 212.1 L59.3 223.9 L56.4 206.4 L53.4 216.3 L51.6 210.7 L50.1 216.1 L47.1 207.4 L44.5 222.2 L41.3 209.5 L38.7 219.3 L37.0 203.0 L34.3 221.3 L31.2 208.9 L29.2 221.4 L26.4 208.9 L23.7 219.4 L22.1 207.0 L19.0 214.6Z" fill="#96ffff" clip-path="url(#cSel)"/>
<path d="M19.0 118.7 L21.9 123.9 L23.5 112.1 L25.6 126.0 L28.5 109.3 L31.3 125.2 L33.3 111.2 L35.6 129.6 L38.0 116.9 L39.9 132.5 L43.0 115.8 L45.4 128.5 L46.8 118.4 L48.2 130.1 L50.5 116.1 L52.6 131.7 L55.1 111.1 L57.6 128.8 L59.0 113.9 L60.7 110.0 L62.4 123.8 L64.9 116.8 L66.6 126.4 L68.8 111.4 L70.7 125.6 L73.0 111.3 L75.2 123.7 L78.3 109.5 L79.8 127.8 L81.4 126.8 L84.5 113.2 L86.5 124.6 L88.4 130.6 L90.0 119.3 L91.8 165.5 L93.2 166.7 L94.6 165.1 L96.0 166.3 L97.4 166.8 L98.8 166.0 L99.5 120.6 L101.6 116.1 L104.8 125.1 L107.2 115.6 L108.7 124.4 L111.0 114.7 L112.9 118.2 L115.5 124.9 L117.2 112.1 L119.3 121.0 L122.3 111.7 L123.9 121.3 L126.5 116.4 L128.7 130.7 L131.4 123.6 L133.0 130.5 L134.6 115.6 L137.2 127.5 L139.5 112.2 L141.2 128.6 L143.7 114.1 L145.2 124.8 L147.8 113.5 L150.6 126.2 L153.3 112.7 L156.4 125.7 L158.3 114.3 L160.5 113.7 L163.4 115.9 L166.2 123.5 L169.1 114.8 L171.0 123.4 L172.8 165.8 L174.2 166.4 L175.6 165.5 L176.3 165.9 L177.0 124.0 L180.2 128.8 L182.5 112.7 L184.6 129.3 L186.1 114.7 L188.0 132.6 L191.0 121.5 L194.1 127.9 L195.9 121.4 L197.5 132.8 L199.2 117.2 L201.5 126.5 L203.9 115.1 L206.6 127.7 L209.7 114.9 L211.5 123.7 L213.7 112.3 L215.1 130.5 L216.7 116.1 L218.4 131.9 L220.8 121.6 L223.7 126.6 L226.8 127.7 L229.1 118.3 L232.1 130.3 L233.8 119.6 L236.7 130.1 L239.2 115.6 L242.2 130.4 L245.2 114.5 L247.4 130.9 L248.0 124.2 L249.8 165.7 L251.2 165.8 L252.6 166.5 L254.0 165.1 L254.8 165.8 L255.5 124.4 L257.3 135.3 L258.9 119.9 L261.4 129.6 L263.8 118.0 L266.0 118.6 L268.1 136.0 L270.5 118.3 L272.6 133.6 L275.7 120.9 L278.1 134.0 L280.1 134.5 L282.9 120.3 L284.4 137.1 L287.5 122.3 L289.1 132.2 L290.8 118.5 L292.8 131.7 L294.4 119.7 L297.4 135.4 L299.1 122.6 L301.7 135.6 L303.6 138.3 L306.3 124.4 L308.6 134.2 L311.6 116.8 L314.4 133.1 L316.0 119.0 L318.9 134.1 L320.9 118.1 L323.0 123.9 L324.8 166.5 L326.2 166.4 L327.6 165.2 L329.3 165.9 L330.0 128.9 L332.0 129.0 L335.0 123.7 L337.2 134.1 L338.8 116.0 L341.6 131.8 L344.1 117.0 L347.0 136.1 L348.4 119.9 L350.8 128.2 L352.2 116.0 L354.9 132.1 L356.9 121.4 L359.8 131.1 L363.0 117.7 L365.2 117.7 L366.8 121.1 L369.3 128.2 L371.2 118.7 L372.9 133.4 L375.2 127.6 L377.6 119.7 L380.6 134.4 L383.8 119.9 L386.9 130.4 L389.0 123.2 L391.8 130.3 L394.9 120.0 L397.0 133.5 L399.0 126.9 L400.8 166.3 L402.2 165.5 L403.6 165.8 L405.0 166.0 L405.8 166.4 L406.5 128.6 L409.2 121.6 L411.7 133.0 L414.7 123.2 L417.1 136.6 L418.6 120.2 L421.2 137.5 L424.1 116.9 L426.0 134.3 L428.8 122.7 L431.2 137.1 L433.0 122.5 L435.5 139.1 L437.1 138.9 L439.2 123.0 L440.9 135.2 L443.0 119.9 L445.1 134.9 L447.8 119.3 L449.2 137.8 L451.3 118.7 L453.0 136.5 L455.3 118.0 L458.0 133.1 L459.7 125.7 L461.7 136.0 L464.9 120.7 L467.3 140.6 L469.8 122.7 L472.0 127.1 L473.8 165.4 L475.2 166.6 L476.6 165.9 L477.8 166.4 L478.5 132.3 L481.4 125.5 L483.1 137.3 L485.2 129.4 L486.7 135.5 L489.0 125.2 L491.4 133.5 L494.5 127.5 L497.6 135.0 L500.6 135.3 L502.6 125.2 L505.5 137.0 L507.1 125.7 L510.1 135.4 L512.5 127.7 L514.1 133.6 L516.5 128.2 L518.2 126.0 L520.9 132.6 L522.9 126.2 L524.6 133.9 L527.6 123.3 L530.0 133.0 L532.6 124.7 L534.7 135.8 L536.9 127.3 L538.7 133.9 L541.6 123.3 L544.6 131.6 L546.0 133.6 L547.8 164.8 L549.2 166.4 L550.3 165.1 L551.0 129.6 L553.8 125.7 L556.8 138.2 L558.9 121.3 L561.5 135.2 L563.8 119.2 L565.5 128.9 L567.7 117.5 L569.9 133.3 L572.4 134.7 L574.1 120.5 L575.9 138.2 L578.3 124.2 L579.8 133.2 L582.2 121.9 L583.9 135.0 L586.0 131.3 L588.3 131.5 L591.1 123.4 L593.2 132.7 L596.4 132.8 L598.8 118.8 L600.8 131.4 L603.4 119.9 L605.8 133.3 L607.9 124.1 L610.3 128.9 L612.3 119.4 L614.0 138.7 L615.9 126.5 L618.5 127.4 L620.3 166.2 L621.7 166.3 L623.3 166.3 L624.0 126.0 L626.2 136.5 L628.8 123.4 L631.1 134.1 L633.8 124.9 L635.9 138.1 L637.5 125.1 L640.0 140.1 L641.4 122.3 L644.4 125.0 L646.4 133.9 L648.7 123.5 L650.5 132.8 L653.2 119.1 L655.5 135.8 L658.5 120.5 L660.6 133.2 L662.1 128.0 L665.0 136.5 L668.0 124.8 L669.5 125.5 L671.7 123.9 L674.3 138.7 L676.8 133.4 L679.9 118.4 L682.7 140.8 L685.5 121.1 L687.3 133.3 L689.3 124.6 L691.4 138.8 L693.0 127.4 L694.8 165.5 L696.2 165.2 L697.6 165.0 L698.3 165.7 L699.0 130.2 L702.0 134.9 L704.1 126.9 L706.1 140.4 L708.2 119.8 L709.8 136.7 L711.2 119.0 L713.9 137.7 L717.1 125.4 L719.0 124.8 L720.4 138.0 L723.3 126.9 L726.1 137.7 L728.9 127.7 L730.8 141.5 L733.2 137.1 L735.5 129.2 L738.5 119.5 L741.7 139.6 L744.6 118.8 L747.1 141.9 L749.3 124.5 L751.0 119.4 L752.9 143.3 L754.3 121.7 L756.4 140.4 L758.0 120.2 L761.0 137.3 L763.1 123.0 L765.1 138.0 L767.1 134.5 L769.8 119.6 L771.9 139.2 L773.0 127.2 L774.8 166.2 L776.2 165.2 L777.6 166.4 L779.3 165.7 L780.0 128.0 L783.0 117.0 L786.0 131.9 L788.6 114.7 L790.8 135.8 L792.4 119.3 L795.3 133.6 L798.4 132.3 L799.9 132.9 L802.4 119.9 L805.6 121.6 L808.6 127.7 L810.5 125.5 L812.8 128.3 L815.1 124.7 L817.9 137.4 L820.9 138.7 L822.6 117.0 L824.5 131.5 L826.7 115.2 L828.7 133.7 L830.8 117.2 L833.3 130.7 L835.8 125.9 L838.3 138.3 L841.0 121.9 L842.9 121.8 L844.5 135.5 L846.1 120.1 L848.7 124.6 L850.4 136.2 L853.5 130.2 L855.3 162.6 L856.7 164.0 L858.1 162.8 L859.3 163.5 L860.0 37.3 L862.3 43.5 L863.5 28.1 L865.1 42.3 L866.8 29.8 L868.8 47.3 L871.1 24.0 L872.8 29.0 L874.2 39.1 L875.4 27.8 L876.8 46.3 L878.6 26.3 L879.7 46.5 L881.9 32.3 L883.2 46.7 L884.6 27.5 L886.5 45.7 L887.8 30.6 L890.1 42.6 L892.4 30.2 L893.5 42.9 L895.8 32.9 L897.1 41.0 L899.4 28.0 L901.1 44.0 L902.8 29.1 L903.9 49.4 L905.6 24.2 L907.3 46.0 L909.0 49.9 L910.6 28.9 L912.5 45.2 L913.7 35.3 L915.4 43.9 L916.6 28.1 L918.9 40.4 L920.0 23.3 L921.1 43.2 L923.3 45.9 L924.5 24.3 L926.7 37.8 L928.5 156.3 L929.9 156.4 L931.3 155.8 L932.0 35.4 L933.7 28.2 L934.9 40.0 L936.3 24.0 L938.4 45.3 L940.2 24.8 L941.3 42.0 L943.4 26.2 L944.7 40.2 L946.7 29.0 L948.9 37.6 L950.1 27.6 L951.3 46.6 L952.6 29.4 L954.4 43.5 L955.8 26.2 L957.4 39.8 L959.0 24.1 L961.0 43.4 L962.0 35.6" fill="none" stroke="#14144e" stroke-width="1" stroke-linejoin="round" shape-rendering="crispEdges"/>
<path d="M19.0 214.6 L22.1 207.0 L23.7 219.4 L26.4 208.9 L29.2 221.4 L31.2 208.9 L34.3 221.3 L37.0 203.0 L38.7 219.3 L41.3 209.5 L44.5 222.2 L47.1 207.4 L50.1 216.1 L51.6 210.7 L53.4 216.3 L56.4 206.4 L59.3 223.9 L60.9 212.1 L62.9 221.7 L64.6 208.0 L66.1 220.8 L67.9 212.9 L69.8 222.0 L71.8 208.6 L73.6 218.6 L76.2 207.9 L77.6 224.7 L79.4 213.1 L81.7 224.8 L84.3 203.3 L86.4 218.9 L90.0 216.3 L91.8 172.7 L93.2 171.1 L94.6 172.9 L96.0 172.8 L97.4 171.1 L98.8 171.5 L99.5 218.0 L101.5 219.3 L102.9 210.1 L105.9 223.4 L107.6 208.9 L109.2 221.7 L112.1 210.6 L114.7 206.6 L117.3 222.6 L119.6 210.4 L121.8 217.9 L124.0 210.0 L126.1 211.9 L129.3 225.5 L131.0 209.3 L133.6 221.9 L136.1 210.2 L139.2 224.3 L141.8 208.6 L144.9 222.8 L146.9 212.8 L148.5 224.8 L151.1 209.1 L152.6 221.4 L154.0 207.4 L156.4 207.4 L158.0 225.6 L159.7 209.5 L162.2 222.1 L163.8 210.5 L166.8 223.0 L169.7 222.8 L171.0 216.5 L172.8 172.7 L174.2 172.7 L175.6 173.0 L176.3 171.7 L177.0 216.5 L180.2 205.0 L183.2 207.9 L186.3 224.3 L187.7 210.6 L190.5 223.6 L192.2 207.5 L195.3 222.0 L198.5 211.1 L200.8 224.0 L203.5 212.4 L205.5 225.9 L208.6 208.0 L210.9 227.6 L213.6 206.4 L215.5 224.0 L218.3 212.1 L221.0 219.8 L223.7 210.3 L226.8 227.0 L229.5 205.0 L232.2 224.7 L233.7 206.4 L235.1 223.1 L238.2 208.6 L241.4 217.7 L243.7 205.9 L246.6 222.7 L248.0 213.6 L249.8 172.3 L251.2 171.8 L252.6 171.6 L254.0 172.5 L254.8 172.0 L255.5 217.5 L258.6 206.2 L261.1 227.6 L263.0 205.5 L265.4 226.9 L267.0 211.3 L269.7 224.5 L272.3 207.3 L274.4 221.6 L276.0 206.7 L278.3 222.4 L280.3 207.1 L283.4 223.4 L285.6 223.0 L287.8 202.2 L289.8 221.8 L292.2 207.2 L294.7 223.2 L297.7 229.2 L299.2 224.3 L301.8 211.7 L304.7 232.2 L306.6 208.0 L308.6 228.1 L310.3 206.2 L312.8 223.8 L315.0 205.2 L317.8 227.2 L319.7 224.7 L321.8 205.5 L323.0 214.2 L324.8 171.7 L326.2 172.4 L327.6 171.1 L329.3 172.3 L330.0 215.5 L331.4 224.1 L334.3 206.0 L337.1 227.7 L339.3 204.8 L341.6 224.7 L343.5 226.1 L345.3 203.8 L348.0 226.7 L351.2 209.7 L354.4 226.4 L356.7 200.2 L358.4 210.9 L361.5 229.6 L363.2 206.2 L365.4 229.6 L366.8 208.9 L369.6 205.7 L372.1 228.3 L373.6 206.6 L375.1 227.4 L376.9 209.5 L380.0 222.6 L381.9 209.4 L383.7 224.8 L385.4 218.6 L388.6 203.4 L390.9 222.3 L392.3 203.0 L394.0 221.1 L396.3 205.2 L399.0 213.4 L400.8 172.6 L402.2 171.1 L403.6 171.4 L405.0 171.9 L405.8 172.3 L406.5 218.1 L408.2 198.7 L409.7 226.7 L411.2 211.3 L412.9 217.0 L415.0 202.6 L417.2 220.9 L418.6 204.1 L421.7 224.9 L424.4 198.4 L427.2 228.9 L429.3 208.6 L432.0 228.9 L435.1 203.3 L437.7 223.1 L439.3 202.3 L441.2 223.4 L444.4 206.5 L447.4 227.0 L448.8 219.0 L451.3 205.8 L454.0 225.6 L456.1 204.6 L457.8 224.3 L459.5 206.2 L461.9 222.2 L463.4 226.8 L466.3 197.2 L468.1 210.8 L469.7 222.6 L472.0 216.6 L473.8 172.6 L475.2 172.1 L476.6 172.2 L477.8 172.4 L478.5 209.1 L480.4 202.8 L482.0 200.3 L483.9 221.0 L487.0 203.1 L490.2 215.6 L491.9 200.3 L494.0 218.9 L495.4 203.5 L498.5 223.4 L500.7 196.3 L502.3 222.3 L504.6 205.8 L507.0 207.2 L509.6 221.7 L511.6 201.7 L513.9 199.9 L515.7 212.7 L518.5 201.1 L520.7 220.9 L523.0 202.4 L526.2 223.3 L528.7 200.4 L530.8 218.7 L533.4 200.5 L536.0 220.5 L538.0 200.0 L540.1 213.3 L541.6 202.4 L543.6 211.3 L546.0 211.6 L547.8 172.0 L549.2 172.8 L550.3 172.8 L551.0 213.2 L552.8 203.7 L555.0 213.1 L557.7 200.9 L560.2 212.5 L562.2 207.6 L563.6 210.7 L566.6 200.2 L569.5 219.7 L572.5 206.2 L574.2 219.9 L576.2 204.7 L577.9 219.6 L579.7 203.7 L581.1 202.7 L583.5 216.6 L586.1 203.4 L589.0 218.9 L591.2 201.4 L594.3 214.9 L596.3 199.2 L598.6 222.8 L600.2 203.0 L603.3 215.7 L605.1 217.5 L607.6 209.5 L610.4 221.1 L612.5 198.4 L614.7 197.0 L616.2 217.3 L618.5 210.1 L620.3 172.7 L621.7 171.4 L623.3 172.0 L624.0 209.1 L625.4 196.3 L627.0 215.5 L629.4 197.3 L631.3 215.5 L633.5 196.1 L636.1 199.9 L638.9 212.1 L641.3 214.1 L643.9 199.3 L647.0 213.1 L650.2 199.4 L653.3 217.5 L656.3 207.7 L659.3 218.5 L661.8 201.9 L663.9 221.1 L666.2 201.3 L668.3 206.6 L670.6 224.5 L672.3 202.2 L674.2 220.1 L676.9 200.4 L679.5 214.4 L682.7 200.0 L684.3 199.5 L686.2 215.5 L689.3 201.0 L692.0 214.3 L693.0 206.6 L694.8 171.5 L696.2 172.4 L697.6 171.8 L698.3 172.2 L699.0 209.2 L700.5 214.5 L702.7 200.4 L705.3 213.3 L707.5 199.1 L709.1 209.9 L710.8 197.4 L712.3 212.7 L714.3 195.8 L716.9 199.9 L720.1 212.6 L722.6 213.5 L724.0 199.7 L726.9 214.1 L729.0 205.4 L731.1 211.1 L733.3 200.6 L735.3 209.6 L736.7 201.7 L739.0 210.4 L740.9 200.1 L743.9 215.7 L746.8 203.8 L749.3 212.2 L751.2 204.8 L753.1 211.0 L755.7 201.3 L757.5 218.4 L759.1 218.7 L760.5 198.7 L762.8 218.5 L765.1 213.2 L767.8 202.3 L770.1 211.6 L773.0 205.8 L774.8 171.7 L776.2 171.0 L777.6 172.9 L779.3 172.3 L780.0 207.6 L781.9 203.9 L784.2 198.8 L787.1 211.5 L790.1 201.2 L793.0 206.4 L796.1 202.8 L799.1 206.2 L801.2 201.3 L803.7 212.6 L805.9 208.3 L808.0 198.7 L810.7 210.6 L812.9 203.2 L815.1 213.9 L818.1 202.1 L821.2 211.8 L824.1 208.7 L825.7 199.8 L828.6 206.1 L830.0 199.8 L833.1 211.8 L835.1 200.8 L837.0 211.6 L840.0 203.8 L842.6 203.1 L844.1 213.7 L846.9 202.6 L849.7 203.7 L851.2 213.8 L853.5 206.5 L855.3 175.6 L856.7 175.1 L858.1 174.3 L859.3 174.8 L860.0 299.7 L861.3 291.2 L863.1 303.4 L864.7 293.7 L866.1 307.5 L867.5 292.0 L869.4 303.1 L870.6 292.8 L871.7 307.0 L873.1 289.7 L874.4 301.6 L875.6 296.2 L877.0 306.0 L878.2 297.8 L879.4 307.5 L881.3 289.6 L882.9 293.0 L885.0 305.7 L886.3 295.0 L888.5 304.6 L890.4 290.8 L891.9 304.0 L893.6 297.3 L895.4 307.6 L896.7 294.7 L898.9 310.8 L900.5 299.4 L901.6 310.3 L903.6 293.7 L905.0 304.6 L906.7 299.1 L908.9 297.3 L911.1 310.7 L913.0 306.8 L914.6 294.7 L916.1 307.8 L917.7 296.1 L920.2 309.4 L921.8 296.0 L923.7 311.0 L925.4 295.8 L926.7 299.0 L928.5 182.0 L929.9 181.2 L931.3 182.0 L932.0 301.3 L933.6 296.9 L935.5 304.3 L937.5 310.2 L939.2 299.1 L940.6 305.8 L942.2 289.9 L944.6 302.2 L946.6 290.8 L947.8 309.7 L949.7 291.1 L951.1 302.7 L953.0 291.1 L954.4 298.2 L956.8 304.9 L959.3 306.7 L960.9 291.2 L962.0 302.0" fill="none" stroke="#14144e" stroke-width="1" stroke-linejoin="round" shape-rendering="crispEdges"/>
<path d="M19.0 478.0 L21.8 484.7 L24.5 474.5 L28.0 484.3 L29.8 471.4 L33.4 490.3 L35.1 470.4 L38.2 487.6 L40.9 471.0 L43.7 486.5 L46.1 471.4 L49.4 485.3 L51.1 475.6 L54.0 480.5 L57.4 476.6 L60.2 486.1 L63.8 471.6 L67.1 485.0 L68.7 470.9 L72.1 483.5 L75.5 482.9 L78.8 475.9 L81.1 473.1 L83.0 488.9 L86.0 471.8 L90.0 480.1 L91.5 525.1 L92.9 524.9 L94.3 524.8 L95.7 524.1 L97.1 524.6 L98.8 525.5 L99.5 474.2 L101.6 483.5 L103.5 468.5 L106.6 485.5 L108.7 468.6 L112.3 480.3 L114.6 470.9 L117.0 484.1 L119.5 469.0 L122.9 483.3 L125.2 480.8 L126.9 468.0 L128.8 479.3 L132.4 474.2 L134.6 484.6 L136.4 470.4 L139.3 488.0 L141.3 469.2 L144.4 490.1 L146.3 482.4 L148.9 467.1 L152.2 485.8 L153.9 468.4 L157.0 482.8 L159.5 467.0 L162.6 480.9 L164.8 467.9 L168.3 467.5 L171.0 479.0 L172.5 524.9 L173.9 524.8 L175.3 525.2 L176.3 524.8 L177.0 480.8 L180.0 490.1 L183.2 471.4 L185.5 488.2 L189.0 476.8 L191.5 491.1 L193.6 471.5 L196.2 486.8 L199.7 463.6 L201.7 487.9 L205.2 474.6 L208.7 492.5 L211.7 472.0 L214.7 477.6 L217.7 469.9 L220.4 486.4 L223.4 470.9 L226.6 491.5 L230.2 473.1 L232.7 487.1 L234.5 471.0 L237.8 486.0 L239.8 471.7 L242.3 489.2 L244.8 467.7 L246.8 488.2 L248.0 478.4 L249.5 525.1 L250.9 525.8 L252.3 524.1 L253.7 524.1 L254.8 524.8 L255.5 476.5 L257.7 472.2 L260.9 471.9 L263.8 478.7 L266.4 471.1 L268.7 479.4 L272.3 467.0 L274.9 481.8 L276.9 467.5 L279.8 478.1 L283.6 465.2 L287.1 482.2 L290.4 472.1 L292.3 489.7 L296.2 466.6 L299.7 483.1 L301.7 473.7 L305.2 466.3 L308.3 484.1 L311.6 469.7 L314.4 470.7 L317.2 482.9 L320.1 475.1 L323.0 478.7 L327.0 524.4 L327.6 525.1 L330.0 477.8 L333.9 473.6 L337.8 485.5 L340.0 482.9 L343.4 467.7 L346.3 483.7 L348.6 469.0 L351.0 485.4 L353.7 468.9 L355.5 481.8 L357.7 467.0 L359.7 490.2 L362.4 466.5 L364.3 489.3 L366.0 468.9 L368.8 484.5 L371.9 486.6 L374.0 469.7 L377.9 481.8 L381.6 473.2 L385.5 487.4 L389.4 467.5 L392.9 484.3 L396.7 473.1 L399.0 480.9 L402.0 524.9 L403.4 525.0 L404.5 525.2 L406.5 476.3 L409.9 466.5 L413.0 478.1 L416.6 468.3 L419.6 488.6 L423.0 468.1 L425.0 471.7 L427.8 483.9 L430.0 480.9 L432.5 481.5 L435.7 484.7 L438.9 468.7 L442.7 478.3 L445.8 482.6 L449.6 480.0 L453.1 487.8 L456.1 475.1 L459.3 482.8 L462.8 475.3 L466.5 483.9 L468.8 472.5 L471.1 483.2 L472.0 479.8 L475.0 525.2 L476.4 525.6 L477.0 524.7 L478.5 479.8 L480.4 476.9 L481.3 490.9 L482.6 480.2 L483.8 488.4 L485.1 477.9 L486.1 488.2 L488.0 478.3 L489.1 477.3 L490.0 484.1 L491.5 476.3 L493.4 486.0 L494.8 488.3 L495.8 479.5 L497.2 476.5 L499.0 486.8 L500.0 479.3 L502.0 489.0 L503.8 478.9 L505.7 485.5 L507.4 475.4 L509.2 488.5 L511.0 488.6 L512.9 479.5 L514.7 488.0 L516.5 475.6 L517.5 485.2 L519.1 486.7 L520.2 477.8 L521.7 485.6 L523.5 478.7 L525.3 488.5 L527.1 480.3 L528.7 486.2 L530.6 481.4 L531.6 489.0 L533.2 479.2 L535.3 487.0 L536.3 480.5 L538.0 488.2 L539.3 486.7 L540.6 478.7 L542.3 487.5 L543.6 475.9 L545.2 482.3 L546.0 484.6 L547.6 524.8 L549.0 524.5 L550.2 524.0 L551.0 482.4 L552.0 488.3 L553.0 477.2 L554.1 487.7 L555.8 477.5 L557.6 489.7 L559.4 477.4 L561.0 489.8 L562.5 478.7 L564.4 488.3 L565.3 482.5 L567.2 487.2 L568.6 476.4 L570.1 487.8 L572.0 481.3 L573.9 488.6 L575.0 478.7 L576.1 485.6 L577.7 476.7 L579.6 485.0 L580.5 477.0 L581.9 487.1 L582.9 479.9 L583.8 476.6 L585.0 488.4 L586.0 477.6 L587.7 488.8 L588.8 480.1 L590.8 487.0 L592.3 476.3 L594.0 487.0 L595.8 478.6 L597.3 488.8 L598.8 479.9 L600.2 488.6 L601.3 478.5 L602.7 486.3 L603.9 476.8 L605.7 486.2 L606.8 478.6 L608.4 489.7 L610.0 475.2 L611.3 485.6 L612.5 475.6 L614.4 486.1 L615.8 474.7 L617.4 487.9 L618.5 481.5 L620.1 524.6 L621.5 525.3 L623.2 524.8 L624.0 483.5 L625.4 486.3 L627.2 476.4 L628.3 487.3 L629.8 489.1 L630.7 490.9 L632.3 479.2 L633.3 485.7 L634.7 477.7 L636.0 485.7 L637.0 486.7 L638.5 477.3 L639.6 487.6 L640.5 480.3 L641.5 485.3 L643.3 478.3 L644.6 488.2 L645.6 475.7 L647.6 488.9 L649.6 477.2 L651.3 485.8 L652.3 478.5 L654.3 485.6 L655.9 481.3 L657.8 490.5 L658.9 478.7 L660.3 488.0 L661.6 478.1 L662.6 485.7 L664.0 479.5 L665.6 484.3 L667.6 478.5 L669.0 487.9 L670.4 489.6 L671.4 478.3 L673.0 486.9 L674.4 477.3 L676.2 485.0 L677.2 479.4 L678.3 485.5 L679.8 476.1 L681.8 488.9 L683.5 479.3 L684.5 485.8 L686.5 477.2 L688.2 478.7 L690.2 483.7 L691.5 479.1 L693.0 484.6 L694.6 525.5 L696.0 525.0 L697.4 524.9 L698.2 525.3 L699.0 482.5 L700.5 479.0 L702.1 487.6 L703.5 477.6 L705.4 487.0 L706.7 477.4 L708.8 488.9 L709.8 478.6 L711.6 488.6 L713.5 475.0 L715.5 478.8 L716.7 486.2 L717.9 475.0 L719.3 486.0 L720.6 478.3 L722.1 486.0 L723.0 476.6 L724.7 485.1 L726.7 476.5 L728.2 486.0 L729.5 476.0 L730.4 487.7 L732.5 486.6 L734.1 476.7 L735.9 484.5 L737.4 476.9 L738.8 487.3 L740.1 477.7 L741.1 486.6 L742.9 476.7 L744.7 487.2 L745.8 478.6 L747.7 486.5 L749.4 481.5 L751.4 486.8 L753.4 479.8 L754.9 477.7 L755.9 486.7 L756.8 479.0 L757.9 486.1 L759.3 475.8 L761.0 485.5 L762.3 479.2 L763.5 485.5 L764.7 476.4 L765.9 483.5 L766.8 480.9 L768.2 485.8 L769.4 476.9 L771.0 487.6 L773.0 483.3 L774.6 524.3 L776.0 525.1 L777.4 524.1 L779.2 525.1 L780.0 480.2 L781.8 487.5 L783.6 477.7 L784.9 488.0 L786.2 474.0 L787.6 484.7 L788.8 476.3 L789.7 488.8 L791.7 481.0 L793.1 485.7 L794.5 481.4 L795.5 490.2 L796.6 482.4 L798.2 489.1 L799.6 480.7 L800.7 488.1 L802.3 481.1 L803.3 486.2 L805.0 474.1 L806.3 486.9 L807.4 480.1 L809.1 487.5 L810.3 476.5 L811.7 484.7 L812.9 486.0 L814.3 475.0 L815.7 487.2 L817.1 480.0 L819.1 484.9 L820.1 476.1 L821.1 486.0 L822.0 477.9 L823.8 490.3 L825.1 477.9 L826.0 487.3 L827.0 488.9 L828.4 477.6 L830.0 486.7 L831.5 472.9 L833.0 486.2 L834.3 484.2 L836.0 485.2 L838.1 477.6 L839.0 484.7 L840.0 475.3 L842.1 487.3 L843.2 472.8 L845.2 482.2 L846.6 475.3 L847.8 486.9 L849.0 475.3 L850.2 489.3 L851.3 476.7 L852.7 482.9 L853.5 485.1 L855.1 517.5 L856.5 518.5 L857.9 517.7 L859.2 517.9 L860.0 397.1 L861.2 391.5 L862.1 399.5 L863.1 394.3 L864.4 401.9 L865.4 394.7 L867.0 402.4 L868.4 394.4 L870.0 393.3 L871.1 393.3 L873.2 398.4 L874.6 393.9 L876.5 398.9 L878.4 393.1 L880.3 396.6 L881.6 393.4 L883.1 398.7 L884.0 392.7 L886.0 401.0 L887.5 392.7 L888.8 401.7 L890.5 391.2 L892.3 399.3 L893.6 388.3 L895.5 398.2 L896.7 391.7 L898.2 389.2 L899.3 398.9 L900.5 393.2 L901.7 403.1 L903.1 393.3 L904.1 400.6 L905.7 389.7 L907.2 402.4 L908.1 400.7 L909.8 393.6 L911.0 399.3 L912.8 395.2 L914.1 403.3 L915.5 391.1 L917.0 400.1 L918.0 390.7 L919.9 400.4 L921.3 391.6 L922.7 399.1 L924.0 390.0 L925.7 400.4 L926.7 397.9 L928.3 515.3 L929.7 515.1 L931.2 515.9 L932.0 393.5 L933.3 393.1 L935.1 401.7 L937.0 390.5 L938.7 404.6 L940.1 400.6 L941.6 392.7 L943.0 398.5 L944.3 391.8 L945.2 400.9 L946.3 400.7 L947.4 391.2 L948.7 401.0 L949.8 404.1 L951.1 392.4 L952.8 400.8 L954.3 391.8 L956.0 403.8 L957.3 393.4 L958.6 393.3 L959.9 398.8 L960.9 391.5 L962.0 396.9 L962.0 658.8 L960.6 651.2 L959.6 661.0 L958.0 654.4 L957.0 663.9 L955.7 653.4 L954.3 663.3 L952.8 654.9 L951.5 660.3 L950.3 651.4 L949.1 654.9 L947.7 654.7 L946.1 661.1 L944.5 657.3 L943.5 652.5 L941.6 654.6 L940.4 662.9 L939.4 654.8 L938.2 662.2 L936.7 649.8 L935.6 662.8 L933.7 654.4 L932.0 655.2 L931.2 539.6 L929.7 540.7 L928.3 540.3 L926.7 654.7 L925.7 655.8 L924.4 664.0 L923.4 653.9 L921.8 661.4 L919.8 653.2 L918.8 653.6 L917.4 660.7 L915.5 650.7 L914.2 665.8 L912.6 650.5 L910.6 660.5 L909.5 650.9 L907.8 662.4 L905.7 652.0 L904.1 663.0 L902.2 654.1 L900.4 667.2 L898.3 653.4 L896.3 661.5 L895.3 652.4 L894.0 660.6 L892.2 657.0 L891.2 660.7 L889.6 651.0 L888.2 651.2 L886.3 658.0 L884.9 650.8 L883.2 652.7 L881.5 660.4 L879.8 653.6 L877.8 661.6 L876.1 658.4 L874.5 655.9 L873.6 663.7 L872.3 656.0 L870.3 660.4 L868.7 661.7 L867.7 652.0 L866.3 663.4 L864.9 654.6 L863.0 665.3 L862.0 650.2 L860.0 658.9 L859.2 538.5 L857.9 537.9 L856.5 538.2 L855.1 538.5 L853.5 572.0 L852.7 566.8 L851.0 579.4 L849.3 578.6 L847.2 568.5 L846.2 581.8 L844.3 571.5 L842.3 577.9 L840.8 570.5 L839.4 581.2 L837.8 578.6 L836.5 580.0 L835.3 568.9 L833.9 583.1 L832.8 570.4 L831.6 575.4 L829.6 567.5 L827.5 581.6 L825.5 580.6 L823.5 569.4 L821.9 581.0 L820.1 566.1 L818.8 579.6 L816.9 569.6 L815.8 578.8 L814.6 578.2 L812.7 567.2 L811.0 579.5 L809.0 566.9 L807.4 578.8 L806.3 570.1 L805.2 579.3 L804.0 565.9 L802.1 576.7 L800.2 569.7 L798.3 578.6 L797.0 566.5 L795.4 574.5 L793.9 568.9 L792.4 578.3 L790.4 569.6 L789.2 576.1 L788.0 567.6 L786.2 575.9 L785.1 570.3 L783.1 567.3 L781.5 568.9 L780.0 573.6 L779.2 531.3 L777.4 532.0 L776.0 531.0 L774.6 530.6 L773.0 575.9 L772.0 585.6 L770.4 572.9 L769.3 582.6 L768.0 573.0 L766.1 581.4 L764.8 572.2 L763.3 579.3 L762.3 570.3 L760.6 580.8 L759.3 571.8 L757.5 583.6 L756.5 570.2 L755.6 584.8 L754.2 574.6 L752.3 583.5 L751.0 567.9 L749.5 584.8 L748.4 571.2 L746.8 585.3 L745.0 567.6 L743.9 580.7 L742.5 570.2 L741.5 584.5 L739.7 570.8 L738.5 581.1 L736.8 565.9 L735.2 582.4 L733.4 572.9 L731.9 578.2 L730.9 567.2 L729.7 579.8 L727.9 572.8 L726.9 583.8 L725.1 566.7 L724.0 582.1 L722.8 568.1 L721.6 579.9 L720.4 568.2 L719.1 578.4 L718.2 580.2 L716.5 572.6 L714.4 582.1 L712.5 568.5 L711.1 575.4 L710.2 567.1 L709.0 582.1 L707.4 569.8 L706.1 582.1 L704.8 571.0 L703.2 579.9 L701.6 573.3 L700.6 578.8 L699.0 577.5 L698.2 531.0 L697.4 530.8 L696.0 531.3 L694.6 531.0 L693.0 570.2 L690.8 565.4 L689.8 577.3 L688.5 567.8 L687.3 574.0 L685.6 573.9 L683.7 568.6 L682.1 575.8 L680.2 567.5 L679.0 575.9 L677.6 564.1 L676.4 576.8 L675.3 567.1 L673.3 574.3 L672.3 567.9 L671.4 574.1 L669.7 564.1 L667.9 574.9 L666.3 568.9 L664.6 574.4 L663.5 564.4 L662.4 571.6 L661.1 565.9 L660.1 575.1 L658.5 567.5 L657.5 574.3 L655.6 565.7 L654.7 572.0 L653.5 566.5 L652.4 571.3 L651.1 574.8 L649.3 562.3 L648.3 572.6 L646.8 566.1 L645.8 573.4 L644.1 564.6 L642.6 574.9 L640.6 565.1 L639.1 564.5 L637.2 578.1 L635.9 568.1 L634.5 576.6 L633.3 567.9 L631.6 572.0 L629.9 563.3 L628.2 573.2 L626.6 568.6 L625.1 567.6 L624.0 573.2 L623.2 530.6 L621.5 530.9 L620.1 531.3 L618.5 571.3 L617.7 568.1 L615.6 572.9 L614.1 568.5 L613.2 575.6 L611.5 565.6 L610.0 574.8 L608.5 567.8 L606.7 573.4 L605.0 574.4 L604.0 566.0 L602.2 574.9 L600.1 565.9 L598.5 575.3 L597.3 566.9 L595.6 574.5 L594.6 569.3 L593.2 577.5 L591.6 568.9 L590.0 576.1 L588.3 568.4 L586.4 565.3 L584.5 576.2 L583.3 568.5 L582.0 577.7 L580.1 568.4 L578.5 575.4 L576.5 567.5 L574.7 575.1 L573.1 570.0 L571.4 573.9 L569.9 566.9 L568.4 574.6 L567.1 568.5 L565.4 577.8 L564.1 569.3 L562.6 569.0 L561.7 573.9 L560.6 564.4 L559.6 575.8 L558.1 566.5 L556.7 574.2 L555.2 569.4 L553.6 569.0 L552.2 575.3 L551.0 572.6 L550.2 532.0 L549.0 531.8 L547.6 531.1 L546.0 573.8 L544.8 578.8 L542.9 572.3 L541.3 581.1 L540.1 572.1 L538.4 570.0 L537.0 580.0 L535.2 568.9 L534.1 576.9 L532.9 572.1 L530.8 579.1 L529.1 572.9 L527.2 579.7 L525.4 571.2 L523.6 580.7 L522.4 571.0 L521.5 580.2 L520.1 572.4 L518.7 577.1 L517.2 572.5 L516.0 579.5 L514.3 569.7 L512.9 581.7 L511.2 569.6 L509.2 576.5 L507.8 573.6 L506.2 579.5 L504.9 571.7 L503.8 578.0 L502.5 570.7 L500.5 577.7 L499.1 571.0 L498.1 577.6 L496.5 569.8 L494.8 577.1 L493.8 570.4 L492.4 580.5 L490.5 569.4 L489.0 576.2 L486.9 569.3 L485.6 576.2 L484.0 572.9 L482.6 577.8 L481.3 579.8 L479.8 569.1 L478.5 576.7 L477.0 530.9 L476.4 531.2 L475.0 530.9 L472.0 576.6 L469.7 582.6 L466.6 573.6 L464.0 569.5 L461.5 580.0 L457.7 566.3 L454.8 588.7 L452.6 581.7 L450.5 571.7 L448.7 583.1 L445.1 570.2 L443.3 589.0 L440.6 564.2 L438.8 584.9 L435.3 574.1 L432.0 577.3 L428.3 562.4 L426.2 584.4 L424.0 572.5 L421.3 580.0 L418.2 568.6 L414.3 583.7 L410.5 573.5 L406.5 576.8 L404.5 531.1 L403.4 531.1 L402.0 530.6 L399.0 577.8 L396.2 583.3 L394.0 565.6 L390.1 568.0 L388.2 568.5 L384.9 579.7 L381.3 568.0 L378.4 577.5 L376.1 565.2 L373.5 582.6 L369.6 568.1 L367.3 581.8 L363.7 567.5 L361.4 578.9 L357.8 568.0 L354.6 583.8 L351.8 569.6 L349.3 577.4 L345.6 570.3 L342.8 579.3 L340.0 585.6 L336.7 568.4 L333.8 581.7 L330.0 575.8 L327.6 531.4 L327.0 531.2 L323.0 578.5 L322.4 567.1 L319.6 579.5 L315.5 568.6 L312.0 584.1 L308.9 569.4 L305.2 582.3 L302.7 569.1 L300.4 590.8 L298.5 572.4 L295.9 582.4 L291.9 577.2 L288.7 586.4 L287.0 584.9 L284.6 579.2 L282.6 573.0 L280.7 570.7 L276.9 581.8 L275.0 571.3 L273.1 581.5 L269.4 570.7 L266.2 584.0 L262.2 573.0 L259.3 585.4 L255.5 578.3 L254.8 531.0 L253.7 531.9 L252.3 531.0 L250.9 530.0 L249.5 530.9 L248.0 578.7 L247.3 569.4 L244.3 590.0 L241.9 574.0 L239.8 584.9 L237.5 567.5 L234.7 585.9 L232.7 567.3 L229.5 577.9 L227.4 569.5 L224.1 586.0 L221.3 566.2 L219.6 590.7 L217.5 571.7 L215.7 590.5 L213.7 576.4 L212.1 589.6 L208.5 572.0 L206.8 583.7 L203.6 573.4 L200.2 587.2 L196.7 585.2 L193.5 568.5 L190.0 584.1 L187.7 565.0 L185.1 591.2 L181.7 565.4 L179.4 585.6 L177.0 578.7 L176.3 531.0 L175.3 531.0 L173.9 530.2 L172.5 531.5 L171.0 583.1 L167.3 572.2 L164.5 586.9 L161.3 571.7 L159.6 585.1 L156.3 578.7 L153.2 591.2 L151.4 578.9 L148.6 590.3 L147.0 587.4 L144.6 576.9 L141.1 591.2 L138.5 574.0 L135.4 583.2 L132.6 574.4 L129.3 584.3 L127.4 589.9 L123.9 572.7 L120.6 590.4 L118.7 570.8 L115.6 589.3 L113.4 578.8 L111.8 584.9 L109.1 576.1 L106.0 589.6 L102.6 576.2 L99.5 582.1 L98.8 531.2 L97.1 530.5 L95.7 531.5 L94.3 531.1 L92.9 531.1 L91.5 531.4 L90.0 581.3 L86.9 584.7 L85.0 570.5 L83.3 583.5 L81.2 570.4 L79.2 587.1 L75.7 568.7 L73.4 588.5 L71.4 577.0 L68.0 585.0 L66.0 576.4 L64.1 584.3 L61.2 572.0 L58.9 587.3 L56.5 575.2 L53.4 592.0 L50.1 578.2 L46.5 590.5 L44.1 572.3 L42.1 586.2 L38.7 590.9 L37.1 580.3 L34.6 584.5 L32.4 576.4 L29.1 590.8 L27.0 577.8 L24.9 588.5 L22.5 580.3 L19.0 582.7Z" fill="#aad2ff"/>
<path d="M19.0 478.0 L21.8 484.7 L24.5 474.5 L28.0 484.3 L29.8 471.4 L33.4 490.3 L35.1 470.4 L38.2 487.6 L40.9 471.0 L43.7 486.5 L46.1 471.4 L49.4 485.3 L51.1 475.6 L54.0 480.5 L57.4 476.6 L60.2 486.1 L63.8 471.6 L67.1 485.0 L68.7 470.9 L72.1 483.5 L75.5 482.9 L78.8 475.9 L81.1 473.1 L83.0 488.9 L86.0 471.8 L90.0 480.1 L91.5 525.1 L92.9 524.9 L94.3 524.8 L95.7 524.1 L97.1 524.6 L98.8 525.5 L99.5 474.2 L101.6 483.5 L103.5 468.5 L106.6 485.5 L108.7 468.6 L112.3 480.3 L114.6 470.9 L117.0 484.1 L119.5 469.0 L122.9 483.3 L125.2 480.8 L126.9 468.0 L128.8 479.3 L132.4 474.2 L134.6 484.6 L136.4 470.4 L139.3 488.0 L141.3 469.2 L144.4 490.1 L146.3 482.4 L148.9 467.1 L152.2 485.8 L153.9 468.4 L157.0 482.8 L159.5 467.0 L162.6 480.9 L164.8 467.9 L168.3 467.5 L171.0 479.0 L172.5 524.9 L173.9 524.8 L175.3 525.2 L176.3 524.8 L177.0 480.8 L180.0 490.1 L183.2 471.4 L185.5 488.2 L189.0 476.8 L191.5 491.1 L193.6 471.5 L196.2 486.8 L199.7 463.6 L201.7 487.9 L205.2 474.6 L208.7 492.5 L211.7 472.0 L214.7 477.6 L217.7 469.9 L220.4 486.4 L223.4 470.9 L226.6 491.5 L230.2 473.1 L232.7 487.1 L234.5 471.0 L237.8 486.0 L239.8 471.7 L242.3 489.2 L244.8 467.7 L246.8 488.2 L248.0 478.4 L249.5 525.1 L250.9 525.8 L252.3 524.1 L253.7 524.1 L254.8 524.8 L255.5 476.5 L257.7 472.2 L260.9 471.9 L263.8 478.7 L266.4 471.1 L268.7 479.4 L272.3 467.0 L274.9 481.8 L276.9 467.5 L279.8 478.1 L283.6 465.2 L287.1 482.2 L290.4 472.1 L292.3 489.7 L296.2 466.6 L299.7 483.1 L301.7 473.7 L305.2 466.3 L308.3 484.1 L311.6 469.7 L314.4 470.7 L317.2 482.9 L320.1 475.1 L323.0 478.7 L327.0 524.4 L327.6 525.1 L330.0 477.8 L333.9 473.6 L337.8 485.5 L340.0 482.9 L343.4 467.7 L346.3 483.7 L348.6 469.0 L351.0 485.4 L353.7 468.9 L355.5 481.8 L357.7 467.0 L359.7 490.2 L362.4 466.5 L364.3 489.3 L366.0 468.9 L368.8 484.5 L371.9 486.6 L374.0 469.7 L377.9 481.8 L381.6 473.2 L385.5 487.4 L389.4 467.5 L392.9 484.3 L396.7 473.1 L399.0 480.9 L402.0 524.9 L403.4 525.0 L404.5 525.2 L406.5 476.3 L409.9 466.5 L413.0 478.1 L416.6 468.3 L419.6 488.6 L423.0 468.1 L425.0 471.7 L427.8 483.9 L430.0 480.9 L432.5 481.5 L435.7 484.7 L438.9 468.7 L442.7 478.3 L445.8 482.6 L449.6 480.0 L453.1 487.8 L456.1 475.1 L459.3 482.8 L462.8 475.3 L466.5 483.9 L468.8 472.5 L471.1 483.2 L472.0 479.8 L475.0 525.2 L476.4 525.6 L477.0 524.7 L478.5 479.8 L480.4 476.9 L481.3 490.9 L482.6 480.2 L483.8 488.4 L485.1 477.9 L486.1 488.2 L488.0 478.3 L489.1 477.3 L490.0 484.1 L491.5 476.3 L493.4 486.0 L494.8 488.3 L495.8 479.5 L497.2 476.5 L499.0 486.8 L500.0 479.3 L502.0 489.0 L503.8 478.9 L505.7 485.5 L507.4 475.4 L509.2 488.5 L511.0 488.6 L512.9 479.5 L514.7 488.0 L516.5 475.6 L517.5 485.2 L519.1 486.7 L520.2 477.8 L521.7 485.6 L523.5 478.7 L525.3 488.5 L527.1 480.3 L528.7 486.2 L530.6 481.4 L531.6 489.0 L533.2 479.2 L535.3 487.0 L536.3 480.5 L538.0 488.2 L539.3 486.7 L540.6 478.7 L542.3 487.5 L543.6 475.9 L545.2 482.3 L546.0 484.6 L547.6 524.8 L549.0 524.5 L550.2 524.0 L551.0 482.4 L552.0 488.3 L553.0 477.2 L554.1 487.7 L555.8 477.5 L557.6 489.7 L559.4 477.4 L561.0 489.8 L562.5 478.7 L564.4 488.3 L565.3 482.5 L567.2 487.2 L568.6 476.4 L570.1 487.8 L572.0 481.3 L573.9 488.6 L575.0 478.7 L576.1 485.6 L577.7 476.7 L579.6 485.0 L580.5 477.0 L581.9 487.1 L582.9 479.9 L583.8 476.6 L585.0 488.4 L586.0 477.6 L587.7 488.8 L588.8 480.1 L590.8 487.0 L592.3 476.3 L594.0 487.0 L595.8 478.6 L597.3 488.8 L598.8 479.9 L600.2 488.6 L601.3 478.5 L602.7 486.3 L603.9 476.8 L605.7 486.2 L606.8 478.6 L608.4 489.7 L610.0 475.2 L611.3 485.6 L612.5 475.6 L614.4 486.1 L615.8 474.7 L617.4 487.9 L618.5 481.5 L620.1 524.6 L621.5 525.3 L623.2 524.8 L624.0 483.5 L625.4 486.3 L627.2 476.4 L628.3 487.3 L629.8 489.1 L630.7 490.9 L632.3 479.2 L633.3 485.7 L634.7 477.7 L636.0 485.7 L637.0 486.7 L638.5 477.3 L639.6 487.6 L640.5 480.3 L641.5 485.3 L643.3 478.3 L644.6 488.2 L645.6 475.7 L647.6 488.9 L649.6 477.2 L651.3 485.8 L652.3 478.5 L654.3 485.6 L655.9 481.3 L657.8 490.5 L658.9 478.7 L660.3 488.0 L661.6 478.1 L662.6 485.7 L664.0 479.5 L665.6 484.3 L667.6 478.5 L669.0 487.9 L670.4 489.6 L671.4 478.3 L673.0 486.9 L674.4 477.3 L676.2 485.0 L677.2 479.4 L678.3 485.5 L679.8 476.1 L681.8 488.9 L683.5 479.3 L684.5 485.8 L686.5 477.2 L688.2 478.7 L690.2 483.7 L691.5 479.1 L693.0 484.6 L694.6 525.5 L696.0 525.0 L697.4 524.9 L698.2 525.3 L699.0 482.5 L700.5 479.0 L702.1 487.6 L703.5 477.6 L705.4 487.0 L706.7 477.4 L708.8 488.9 L709.8 478.6 L711.6 488.6 L713.5 475.0 L715.5 478.8 L716.7 486.2 L717.9 475.0 L719.3 486.0 L720.6 478.3 L722.1 486.0 L723.0 476.6 L724.7 485.1 L726.7 476.5 L728.2 486.0 L729.5 476.0 L730.4 487.7 L732.5 486.6 L734.1 476.7 L735.9 484.5 L737.4 476.9 L738.8 487.3 L740.1 477.7 L741.1 486.6 L742.9 476.7 L744.7 487.2 L745.8 478.6 L747.7 486.5 L749.4 481.5 L751.4 486.8 L753.4 479.8 L754.9 477.7 L755.9 486.7 L756.8 479.0 L757.9 486.1 L759.3 475.8 L761.0 485.5 L762.3 479.2 L763.5 485.5 L764.7 476.4 L765.9 483.5 L766.8 480.9 L768.2 485.8 L769.4 476.9 L771.0 487.6 L773.0 483.3 L774.6 524.3 L776.0 525.1 L777.4 524.1 L779.2 525.1 L780.0 480.2 L781.8 487.5 L783.6 477.7 L784.9 488.0 L786.2 474.0 L787.6 484.7 L788.8 476.3 L789.7 488.8 L791.7 481.0 L793.1 485.7 L794.5 481.4 L795.5 490.2 L796.6 482.4 L798.2 489.1 L799.6 480.7 L800.7 488.1 L802.3 481.1 L803.3 486.2 L805.0 474.1 L806.3 486.9 L807.4 480.1 L809.1 487.5 L810.3 476.5 L811.7 484.7 L812.9 486.0 L814.3 475.0 L815.7 487.2 L817.1 480.0 L819.1 484.9 L820.1 476.1 L821.1 486.0 L822.0 477.9 L823.8 490.3 L825.1 477.9 L826.0 487.3 L827.0 488.9 L828.4 477.6 L830.0 486.7 L831.5 472.9 L833.0 486.2 L834.3 484.2 L836.0 485.2 L838.1 477.6 L839.0 484.7 L840.0 475.3 L842.1 487.3 L843.2 472.8 L845.2 482.2 L846.6 475.3 L847.8 486.9 L849.0 475.3 L850.2 489.3 L851.3 476.7 L852.7 482.9 L853.5 485.1 L855.1 517.5 L856.5 518.5 L857.9 517.7 L859.2 517.9 L860.0 397.1 L861.2 391.5 L862.1 399.5 L863.1 394.3 L864.4 401.9 L865.4 394.7 L867.0 402.4 L868.4 394.4 L870.0 393.3 L871.1 393.3 L873.2 398.4 L874.6 393.9 L876.5 398.9 L878.4 393.1 L880.3 396.6 L881.6 393.4 L883.1 398.7 L884.0 392.7 L886.0 401.0 L887.5 392.7 L888.8 401.7 L890.5 391.2 L892.3 399.3 L893.6 388.3 L895.5 398.2 L896.7 391.7 L898.2 389.2 L899.3 398.9 L900.5 393.2 L901.7 403.1 L903.1 393.3 L904.1 400.6 L905.7 389.7 L907.2 402.4 L908.1 400.7 L909.8 393.6 L911.0 399.3 L912.8 395.2 L914.1 403.3 L915.5 391.1 L917.0 400.1 L918.0 390.7 L919.9 400.4 L921.3 391.6 L922.7 399.1 L924.0 390.0 L925.7 400.4 L926.7 397.9 L928.3 515.3 L929.7 515.1 L931.2 515.9 L932.0 393.5 L933.3 393.1 L935.1 401.7 L937.0 390.5 L938.7 404.6 L940.1 400.6 L941.6 392.7 L943.0 398.5 L944.3 391.8 L945.2 400.9 L946.3 400.7 L947.4 391.2 L948.7 401.0 L949.8 404.1 L951.1 392.4 L952.8 400.8 L954.3 391.8 L956.0 403.8 L957.3 393.4 L958.6 393.3 L959.9 398.8 L960.9 391.5 L962.0 396.9 L962.0 658.8 L960.6 651.2 L959.6 661.0 L958.0 654.4 L957.0 663.9 L955.7 653.4 L954.3 663.3 L952.8 654.9 L951.5 660.3 L950.3 651.4 L949.1 654.9 L947.7 654.7 L946.1 661.1 L944.5 657.3 L943.5 652.5 L941.6 654.6 L940.4 662.9 L939.4 654.8 L938.2 662.2 L936.7 649.8 L935.6 662.8 L933.7 654.4 L932.0 655.2 L931.2 539.6 L929.7 540.7 L928.3 540.3 L926.7 654.7 L925.7 655.8 L924.4 664.0 L923.4 653.9 L921.8 661.4 L919.8 653.2 L918.8 653.6 L917.4 660.7 L915.5 650.7 L914.2 665.8 L912.6 650.5 L910.6 660.5 L909.5 650.9 L907.8 662.4 L905.7 652.0 L904.1 663.0 L902.2 654.1 L900.4 667.2 L898.3 653.4 L896.3 661.5 L895.3 652.4 L894.0 660.6 L892.2 657.0 L891.2 660.7 L889.6 651.0 L888.2 651.2 L886.3 658.0 L884.9 650.8 L883.2 652.7 L881.5 660.4 L879.8 653.6 L877.8 661.6 L876.1 658.4 L874.5 655.9 L873.6 663.7 L872.3 656.0 L870.3 660.4 L868.7 661.7 L867.7 652.0 L866.3 663.4 L864.9 654.6 L863.0 665.3 L862.0 650.2 L860.0 658.9 L859.2 538.5 L857.9 537.9 L856.5 538.2 L855.1 538.5 L853.5 572.0 L852.7 566.8 L851.0 579.4 L849.3 578.6 L847.2 568.5 L846.2 581.8 L844.3 571.5 L842.3 577.9 L840.8 570.5 L839.4 581.2 L837.8 578.6 L836.5 580.0 L835.3 568.9 L833.9 583.1 L832.8 570.4 L831.6 575.4 L829.6 567.5 L827.5 581.6 L825.5 580.6 L823.5 569.4 L821.9 581.0 L820.1 566.1 L818.8 579.6 L816.9 569.6 L815.8 578.8 L814.6 578.2 L812.7 567.2 L811.0 579.5 L809.0 566.9 L807.4 578.8 L806.3 570.1 L805.2 579.3 L804.0 565.9 L802.1 576.7 L800.2 569.7 L798.3 578.6 L797.0 566.5 L795.4 574.5 L793.9 568.9 L792.4 578.3 L790.4 569.6 L789.2 576.1 L788.0 567.6 L786.2 575.9 L785.1 570.3 L783.1 567.3 L781.5 568.9 L780.0 573.6 L779.2 531.3 L777.4 532.0 L776.0 531.0 L774.6 530.6 L773.0 575.9 L772.0 585.6 L770.4 572.9 L769.3 582.6 L768.0 573.0 L766.1 581.4 L764.8 572.2 L763.3 579.3 L762.3 570.3 L760.6 580.8 L759.3 571.8 L757.5 583.6 L756.5 570.2 L755.6 584.8 L754.2 574.6 L752.3 583.5 L751.0 567.9 L749.5 584.8 L748.4 571.2 L746.8 585.3 L745.0 567.6 L743.9 580.7 L742.5 570.2 L741.5 584.5 L739.7 570.8 L738.5 581.1 L736.8 565.9 L735.2 582.4 L733.4 572.9 L731.9 578.2 L730.9 567.2 L729.7 579.8 L727.9 572.8 L726.9 583.8 L725.1 566.7 L724.0 582.1 L722.8 568.1 L721.6 579.9 L720.4 568.2 L719.1 578.4 L718.2 580.2 L716.5 572.6 L714.4 582.1 L712.5 568.5 L711.1 575.4 L710.2 567.1 L709.0 582.1 L707.4 569.8 L706.1 582.1 L704.8 571.0 L703.2 579.9 L701.6 573.3 L700.6 578.8 L699.0 577.5 L698.2 531.0 L697.4 530.8 L696.0 531.3 L694.6 531.0 L693.0 570.2 L690.8 565.4 L689.8 577.3 L688.5 567.8 L687.3 574.0 L685.6 573.9 L683.7 568.6 L682.1 575.8 L680.2 567.5 L679.0 575.9 L677.6 564.1 L676.4 576.8 L675.3 567.1 L673.3 574.3 L672.3 567.9 L671.4 574.1 L669.7 564.1 L667.9 574.9 L666.3 568.9 L664.6 574.4 L663.5 564.4 L662.4 571.6 L661.1 565.9 L660.1 575.1 L658.5 567.5 L657.5 574.3 L655.6 565.7 L654.7 572.0 L653.5 566.5 L652.4 571.3 L651.1 574.8 L649.3 562.3 L648.3 572.6 L646.8 566.1 L645.8 573.4 L644.1 564.6 L642.6 574.9 L640.6 565.1 L639.1 564.5 L637.2 578.1 L635.9 568.1 L634.5 576.6 L633.3 567.9 L631.6 572.0 L629.9 563.3 L628.2 573.2 L626.6 568.6 L625.1 567.6 L624.0 573.2 L623.2 530.6 L621.5 530.9 L620.1 531.3 L618.5 571.3 L617.7 568.1 L615.6 572.9 L614.1 568.5 L613.2 575.6 L611.5 565.6 L610.0 574.8 L608.5 567.8 L606.7 573.4 L605.0 574.4 L604.0 566.0 L602.2 574.9 L600.1 565.9 L598.5 575.3 L597.3 566.9 L595.6 574.5 L594.6 569.3 L593.2 577.5 L591.6 568.9 L590.0 576.1 L588.3 568.4 L586.4 565.3 L584.5 576.2 L583.3 568.5 L582.0 577.7 L580.1 568.4 L578.5 575.4 L576.5 567.5 L574.7 575.1 L573.1 570.0 L571.4 573.9 L569.9 566.9 L568.4 574.6 L567.1 568.5 L565.4 577.8 L564.1 569.3 L562.6 569.0 L561.7 573.9 L560.6 564.4 L559.6 575.8 L558.1 566.5 L556.7 574.2 L555.2 569.4 L553.6 569.0 L552.2 575.3 L551.0 572.6 L550.2 532.0 L549.0 531.8 L547.6 531.1 L546.0 573.8 L544.8 578.8 L542.9 572.3 L541.3 581.1 L540.1 572.1 L538.4 570.0 L537.0 580.0 L535.2 568.9 L534.1 576.9 L532.9 572.1 L530.8 579.1 L529.1 572.9 L527.2 579.7 L525.4 571.2 L523.6 580.7 L522.4 571.0 L521.5 580.2 L520.1 572.4 L518.7 577.1 L517.2 572.5 L516.0 579.5 L514.3 569.7 L512.9 581.7 L511.2 569.6 L509.2 576.5 L507.8 573.6 L506.2 579.5 L504.9 571.7 L503.8 578.0 L502.5 570.7 L500.5 577.7 L499.1 571.0 L498.1 577.6 L496.5 569.8 L494.8 577.1 L493.8 570.4 L492.4 580.5 L490.5 569.4 L489.0 576.2 L486.9 569.3 L485.6 576.2 L484.0 572.9 L482.6 577.8 L481.3 579.8 L479.8 569.1 L478.5 576.7 L477.0 530.9 L476.4 531.2 L475.0 530.9 L472.0 576.6 L469.7 582.6 L466.6 573.6 L464.0 569.5 L461.5 580.0 L457.7 566.3 L454.8 588.7 L452.6 581.7 L450.5 571.7 L448.7 583.1 L445.1 570.2 L443.3 589.0 L440.6 564.2 L438.8 584.9 L435.3 574.1 L432.0 577.3 L428.3 562.4 L426.2 584.4 L424.0 572.5 L421.3 580.0 L418.2 568.6 L414.3 583.7 L410.5 573.5 L406.5 576.8 L404.5 531.1 L403.4 531.1 L402.0 530.6 L399.0 577.8 L396.2 583.3 L394.0 565.6 L390.1 568.0 L388.2 568.5 L384.9 579.7 L381.3 568.0 L378.4 577.5 L376.1 565.2 L373.5 582.6 L369.6 568.1 L367.3 581.8 L363.7 567.5 L361.4 578.9 L357.8 568.0 L354.6 583.8 L351.8 569.6 L349.3 577.4 L345.6 570.3 L342.8 579.3 L340.0 585.6 L336.7 568.4 L333.8 581.7 L330.0 575.8 L327.6 531.4 L327.0 531.2 L323.0 578.5 L322.4 567.1 L319.6 579.5 L315.5 568.6 L312.0 584.1 L308.9 569.4 L305.2 582.3 L302.7 569.1 L300.4 590.8 L298.5 572.4 L295.9 582.4 L291.9 577.2 L288.7 586.4 L287.0 584.9 L284.6 579.2 L282.6 573.0 L280.7 570.7 L276.9 581.8 L275.0 571.3 L273.1 581.5 L269.4 570.7 L266.2 584.0 L262.2 573.0 L259.3 585.4 L255.5 578.3 L254.8 531.0 L253.7 531.9 L252.3 531.0 L250.9 530.0 L249.5 530.9 L248.0 578.7 L247.3 569.4 L244.3 590.0 L241.9 574.0 L239.8 584.9 L237.5 567.5 L234.7 585.9 L232.7 567.3 L229.5 577.9 L227.4 569.5 L224.1 586.0 L221.3 566.2 L219.6 590.7 L217.5 571.7 L215.7 590.5 L213.7 576.4 L212.1 589.6 L208.5 572.0 L206.8 583.7 L203.6 573.4 L200.2 587.2 L196.7 585.2 L193.5 568.5 L190.0 584.1 L187.7 565.0 L185.1 591.2 L181.7 565.4 L179.4 585.6 L177.0 578.7 L176.3 531.0 L175.3 531.0 L173.9 530.2 L172.5 531.5 L171.0 583.1 L167.3 572.2 L164.5 586.9 L161.3 571.7 L159.6 585.1 L156.3 578.7 L153.2 591.2 L151.4 578.9 L148.6 590.3 L147.0 587.4 L144.6 576.9 L141.1 591.2 L138.5 574.0 L135.4 583.2 L132.6 574.4 L129.3 584.3 L127.4 589.9 L123.9 572.7 L120.6 590.4 L118.7 570.8 L115.6 589.3 L113.4 578.8 L111.8 584.9 L109.1 576.1 L106.0 589.6 L102.6 576.2 L99.5 582.1 L98.8 531.2 L97.1 530.5 L95.7 531.5 L94.3 531.1 L92.9 531.1 L91.5 531.4 L90.0 581.3 L86.9 584.7 L85.0 570.5 L83.3 583.5 L81.2 570.4 L79.2 587.1 L75.7 568.7 L73.4 588.5 L71.4 577.0 L68.0 585.0 L66.0 576.4 L64.1 584.3 L61.2 572.0 L58.9 587.3 L56.5 575.2 L53.4 592.0 L50.1 578.2 L46.5 590.5 L44.1 572.3 L42.1 586.2 L38.7 590.9 L37.1 580.3 L34.6 584.5 L32.4 576.4 L29.1 590.8 L27.0 577.8 L24.9 588.5 L22.5 580.3 L19.0 582.7Z" fill="#96ffff" clip-path="url(#cSel)"/>
<path d="M19.0 478.0 L21.8 484.7 L24.5 474.5 L28.0 484.3 L29.8 471.4 L33.4 490.3 L35.1 470.4 L38.2 487.6 L40.9 471.0 L43.7 486.5 L46.1 471.4 L49.4 485.3 L51.1 475.6 L54.0 480.5 L57.4 476.6 L60.2 486.1 L63.8 471.6 L67.1 485.0 L68.7 470.9 L72.1 483.5 L75.5 482.9 L78.8 475.9 L81.1 473.1 L83.0 488.9 L86.0 471.8 L90.0 480.1 L91.5 525.1 L92.9 524.9 L94.3 524.8 L95.7 524.1 L97.1 524.6 L98.8 525.5 L99.5 474.2 L101.6 483.5 L103.5 468.5 L106.6 485.5 L108.7 468.6 L112.3 480.3 L114.6 470.9 L117.0 484.1 L119.5 469.0 L122.9 483.3 L125.2 480.8 L126.9 468.0 L128.8 479.3 L132.4 474.2 L134.6 484.6 L136.4 470.4 L139.3 488.0 L141.3 469.2 L144.4 490.1 L146.3 482.4 L148.9 467.1 L152.2 485.8 L153.9 468.4 L157.0 482.8 L159.5 467.0 L162.6 480.9 L164.8 467.9 L168.3 467.5 L171.0 479.0 L172.5 524.9 L173.9 524.8 L175.3 525.2 L176.3 524.8 L177.0 480.8 L180.0 490.1 L183.2 471.4 L185.5 488.2 L189.0 476.8 L191.5 491.1 L193.6 471.5 L196.2 486.8 L199.7 463.6 L201.7 487.9 L205.2 474.6 L208.7 492.5 L211.7 472.0 L214.7 477.6 L217.7 469.9 L220.4 486.4 L223.4 470.9 L226.6 491.5 L230.2 473.1 L232.7 487.1 L234.5 471.0 L237.8 486.0 L239.8 471.7 L242.3 489.2 L244.8 467.7 L246.8 488.2 L248.0 478.4 L249.5 525.1 L250.9 525.8 L252.3 524.1 L253.7 524.1 L254.8 524.8 L255.5 476.5 L257.7 472.2 L260.9 471.9 L263.8 478.7 L266.4 471.1 L268.7 479.4 L272.3 467.0 L274.9 481.8 L276.9 467.5 L279.8 478.1 L283.6 465.2 L287.1 482.2 L290.4 472.1 L292.3 489.7 L296.2 466.6 L299.7 483.1 L301.7 473.7 L305.2 466.3 L308.3 484.1 L311.6 469.7 L314.4 470.7 L317.2 482.9 L320.1 475.1 L323.0 478.7 L327.0 524.4 L327.6 525.1 L330.0 477.8 L333.9 473.6 L337.8 485.5 L340.0 482.9 L343.4 467.7 L346.3 483.7 L348.6 469.0 L351.0 485.4 L353.7 468.9 L355.5 481.8 L357.7 467.0 L359.7 490.2 L362.4 466.5 L364.3 489.3 L366.0 468.9 L368.8 484.5 L371.9 486.6 L374.0 469.7 L377.9 481.8 L381.6 473.2 L385.5 487.4 L389.4 467.5 L392.9 484.3 L396.7 473.1 L399.0 480.9 L402.0 524.9 L403.4 525.0 L404.5 525.2 L406.5 476.3 L409.9 466.5 L413.0 478.1 L416.6 468.3 L419.6 488.6 L423.0 468.1 L425.0 471.7 L427.8 483.9 L430.0 480.9 L432.5 481.5 L435.7 484.7 L438.9 468.7 L442.7 478.3 L445.8 482.6 L449.6 480.0 L453.1 487.8 L456.1 475.1 L459.3 482.8 L462.8 475.3 L466.5 483.9 L468.8 472.5 L471.1 483.2 L472.0 479.8 L475.0 525.2 L476.4 525.6 L477.0 524.7 L478.5 479.8 L480.4 476.9 L481.3 490.9 L482.6 480.2 L483.8 488.4 L485.1 477.9 L486.1 488.2 L488.0 478.3 L489.1 477.3 L490.0 484.1 L491.5 476.3 L493.4 486.0 L494.8 488.3 L495.8 479.5 L497.2 476.5 L499.0 486.8 L500.0 479.3 L502.0 489.0 L503.8 478.9 L505.7 485.5 L507.4 475.4 L509.2 488.5 L511.0 488.6 L512.9 479.5 L514.7 488.0 L516.5 475.6 L517.5 485.2 L519.1 486.7 L520.2 477.8 L521.7 485.6 L523.5 478.7 L525.3 488.5 L527.1 480.3 L528.7 486.2 L530.6 481.4 L531.6 489.0 L533.2 479.2 L535.3 487.0 L536.3 480.5 L538.0 488.2 L539.3 486.7 L540.6 478.7 L542.3 487.5 L543.6 475.9 L545.2 482.3 L546.0 484.6 L547.6 524.8 L549.0 524.5 L550.2 524.0 L551.0 482.4 L552.0 488.3 L553.0 477.2 L554.1 487.7 L555.8 477.5 L557.6 489.7 L559.4 477.4 L561.0 489.8 L562.5 478.7 L564.4 488.3 L565.3 482.5 L567.2 487.2 L568.6 476.4 L570.1 487.8 L572.0 481.3 L573.9 488.6 L575.0 478.7 L576.1 485.6 L577.7 476.7 L579.6 485.0 L580.5 477.0 L581.9 487.1 L582.9 479.9 L583.8 476.6 L585.0 488.4 L586.0 477.6 L587.7 488.8 L588.8 480.1 L590.8 487.0 L592.3 476.3 L594.0 487.0 L595.8 478.6 L597.3 488.8 L598.8 479.9 L600.2 488.6 L601.3 478.5 L602.7 486.3 L603.9 476.8 L605.7 486.2 L606.8 478.6 L608.4 489.7 L610.0 475.2 L611.3 485.6 L612.5 475.6 L614.4 486.1 L615.8 474.7 L617.4 487.9 L618.5 481.5 L620.1 524.6 L621.5 525.3 L623.2 524.8 L624.0 483.5 L625.4 486.3 L627.2 476.4 L628.3 487.3 L629.8 489.1 L630.7 490.9 L632.3 479.2 L633.3 485.7 L634.7 477.7 L636.0 485.7 L637.0 486.7 L638.5 477.3 L639.6 487.6 L640.5 480.3 L641.5 485.3 L643.3 478.3 L644.6 488.2 L645.6 475.7 L647.6 488.9 L649.6 477.2 L651.3 485.8 L652.3 478.5 L654.3 485.6 L655.9 481.3 L657.8 490.5 L658.9 478.7 L660.3 488.0 L661.6 478.1 L662.6 485.7 L664.0 479.5 L665.6 484.3 L667.6 478.5 L669.0 487.9 L670.4 489.6 L671.4 478.3 L673.0 486.9 L674.4 477.3 L676.2 485.0 L677.2 479.4 L678.3 485.5 L679.8 476.1 L681.8 488.9 L683.5 479.3 L684.5 485.8 L686.5 477.2 L688.2 478.7 L690.2 483.7 L691.5 479.1 L693.0 484.6 L694.6 525.5 L696.0 525.0 L697.4 524.9 L698.2 525.3 L699.0 482.5 L700.5 479.0 L702.1 487.6 L703.5 477.6 L705.4 487.0 L706.7 477.4 L708.8 488.9 L709.8 478.6 L711.6 488.6 L713.5 475.0 L715.5 478.8 L716.7 486.2 L717.9 475.0 L719.3 486.0 L720.6 478.3 L722.1 486.0 L723.0 476.6 L724.7 485.1 L726.7 476.5 L728.2 486.0 L729.5 476.0 L730.4 487.7 L732.5 486.6 L734.1 476.7 L735.9 484.5 L737.4 476.9 L738.8 487.3 L740.1 477.7 L741.1 486.6 L742.9 476.7 L744.7 487.2 L745.8 478.6 L747.7 486.5 L749.4 481.5 L751.4 486.8 L753.4 479.8 L754.9 477.7 L755.9 486.7 L756.8 479.0 L757.9 486.1 L759.3 475.8 L761.0 485.5 L762.3 479.2 L763.5 485.5 L764.7 476.4 L765.9 483.5 L766.8 480.9 L768.2 485.8 L769.4 476.9 L771.0 487.6 L773.0 483.3 L774.6 524.3 L776.0 525.1 L777.4 524.1 L779.2 525.1 L780.0 480.2 L781.8 487.5 L783.6 477.7 L784.9 488.0 L786.2 474.0 L787.6 484.7 L788.8 476.3 L789.7 488.8 L791.7 481.0 L793.1 485.7 L794.5 481.4 L795.5 490.2 L796.6 482.4 L798.2 489.1 L799.6 480.7 L800.7 488.1 L802.3 481.1 L803.3 486.2 L805.0 474.1 L806.3 486.9 L807.4 480.1 L809.1 487.5 L810.3 476.5 L811.7 484.7 L812.9 486.0 L814.3 475.0 L815.7 487.2 L817.1 480.0 L819.1 484.9 L820.1 476.1 L821.1 486.0 L822.0 477.9 L823.8 490.3 L825.1 477.9 L826.0 487.3 L827.0 488.9 L828.4 477.6 L830.0 486.7 L831.5 472.9 L833.0 486.2 L834.3 484.2 L836.0 485.2 L838.1 477.6 L839.0 484.7 L840.0 475.3 L842.1 487.3 L843.2 472.8 L845.2 482.2 L846.6 475.3 L847.8 486.9 L849.0 475.3 L850.2 489.3 L851.3 476.7 L852.7 482.9 L853.5 485.1 L855.1 517.5 L856.5 518.5 L857.9 517.7 L859.2 517.9 L860.0 397.1 L861.2 391.5 L862.1 399.5 L863.1 394.3 L864.4 401.9 L865.4 394.7 L867.0 402.4 L868.4 394.4 L870.0 393.3 L871.1 393.3 L873.2 398.4 L874.6 393.9 L876.5 398.9 L878.4 393.1 L880.3 396.6 L881.6 393.4 L883.1 398.7 L884.0 392.7 L886.0 401.0 L887.5 392.7 L888.8 401.7 L890.5 391.2 L892.3 399.3 L893.6 388.3 L895.5 398.2 L896.7 391.7 L898.2 389.2 L899.3 398.9 L900.5 393.2 L901.7 403.1 L903.1 393.3 L904.1 400.6 L905.7 389.7 L907.2 402.4 L908.1 400.7 L909.8 393.6 L911.0 399.3 L912.8 395.2 L914.1 403.3 L915.5 391.1 L917.0 400.1 L918.0 390.7 L919.9 400.4 L921.3 391.6 L922.7 399.1 L924.0 390.0 L925.7 400.4 L926.7 397.9 L928.3 515.3 L929.7 515.1 L931.2 515.9 L932.0 393.5 L933.3 393.1 L935.1 401.7 L937.0 390.5 L938.7 404.6 L940.1 400.6 L941.6 392.7 L943.0 398.5 L944.3 391.8 L945.2 400.9 L946.3 400.7 L947.4 391.2 L948.7 401.0 L949.8 404.1 L951.1 392.4 L952.8 400.8 L954.3 391.8 L956.0 403.8 L957.3 393.4 L958.6 393.3 L959.9 398.8 L960.9 391.5 L962.0 396.9" fill="none" stroke="#14144e" stroke-width="1" stroke-linejoin="round" shape-rendering="crispEdges"/>
<path d="M19.0 582.7 L22.5 580.3 L24.9 588.5 L27.0 577.8 L29.1 590.8 L32.4 576.4 L34.6 584.5 L37.1 580.3 L38.7 590.9 L42.1 586.2 L44.1 572.3 L46.5 590.5 L50.1 578.2 L53.4 592.0 L56.5 575.2 L58.9 587.3 L61.2 572.0 L64.1 584.3 L66.0 576.4 L68.0 585.0 L71.4 577.0 L73.4 588.5 L75.7 568.7 L79.2 587.1 L81.2 570.4 L83.3 583.5 L85.0 570.5 L86.9 584.7 L90.0 581.3 L91.5 531.4 L92.9 531.1 L94.3 531.1 L95.7 531.5 L97.1 530.5 L98.8 531.2 L99.5 582.1 L102.6 576.2 L106.0 589.6 L109.1 576.1 L111.8 584.9 L113.4 578.8 L115.6 589.3 L118.7 570.8 L120.6 590.4 L123.9 572.7 L127.4 589.9 L129.3 584.3 L132.6 574.4 L135.4 583.2 L138.5 574.0 L141.1 591.2 L144.6 576.9 L147.0 587.4 L148.6 590.3 L151.4 578.9 L153.2 591.2 L156.3 578.7 L159.6 585.1 L161.3 571.7 L164.5 586.9 L167.3 572.2 L171.0 583.1 L172.5 531.5 L173.9 530.2 L175.3 531.0 L176.3 531.0 L177.0 578.7 L179.4 585.6 L181.7 565.4 L185.1 591.2 L187.7 565.0 L190.0 584.1 L193.5 568.5 L196.7 585.2 L200.2 587.2 L203.6 573.4 L206.8 583.7 L208.5 572.0 L212.1 589.6 L213.7 576.4 L215.7 590.5 L217.5 571.7 L219.6 590.7 L221.3 566.2 L224.1 586.0 L227.4 569.5 L229.5 577.9 L232.7 567.3 L234.7 585.9 L237.5 567.5 L239.8 584.9 L241.9 574.0 L244.3 590.0 L247.3 569.4 L248.0 578.7 L249.5 530.9 L250.9 530.0 L252.3 531.0 L253.7 531.9 L254.8 531.0 L255.5 578.3 L259.3 585.4 L262.2 573.0 L266.2 584.0 L269.4 570.7 L273.1 581.5 L275.0 571.3 L276.9 581.8 L280.7 570.7 L282.6 573.0 L284.6 579.2 L287.0 584.9 L288.7 586.4 L291.9 577.2 L295.9 582.4 L298.5 572.4 L300.4 590.8 L302.7 569.1 L305.2 582.3 L308.9 569.4 L312.0 584.1 L315.5 568.6 L319.6 579.5 L322.4 567.1 L323.0 578.5 L327.0 531.2 L327.6 531.4 L330.0 575.8 L333.8 581.7 L336.7 568.4 L340.0 585.6 L342.8 579.3 L345.6 570.3 L349.3 577.4 L351.8 569.6 L354.6 583.8 L357.8 568.0 L361.4 578.9 L363.7 567.5 L367.3 581.8 L369.6 568.1 L373.5 582.6 L376.1 565.2 L378.4 577.5 L381.3 568.0 L384.9 579.7 L388.2 568.5 L390.1 568.0 L394.0 565.6 L396.2 583.3 L399.0 577.8 L402.0 530.6 L403.4 531.1 L404.5 531.1 L406.5 576.8 L410.5 573.5 L414.3 583.7 L418.2 568.6 L421.3 580.0 L424.0 572.5 L426.2 584.4 L428.3 562.4 L432.0 577.3 L435.3 574.1 L438.8 584.9 L440.6 564.2 L443.3 589.0 L445.1 570.2 L448.7 583.1 L450.5 571.7 L452.6 581.7 L454.8 588.7 L457.7 566.3 L461.5 580.0 L464.0 569.5 L466.6 573.6 L469.7 582.6 L472.0 576.6 L475.0 530.9 L476.4 531.2 L477.0 530.9 L478.5 576.7 L479.8 569.1 L481.3 579.8 L482.6 577.8 L484.0 572.9 L485.6 576.2 L486.9 569.3 L489.0 576.2 L490.5 569.4 L492.4 580.5 L493.8 570.4 L494.8 577.1 L496.5 569.8 L498.1 577.6 L499.1 571.0 L500.5 577.7 L502.5 570.7 L503.8 578.0 L504.9 571.7 L506.2 579.5 L507.8 573.6 L509.2 576.5 L511.2 569.6 L512.9 581.7 L514.3 569.7 L516.0 579.5 L517.2 572.5 L518.7 577.1 L520.1 572.4 L521.5 580.2 L522.4 571.0 L523.6 580.7 L525.4 571.2 L527.2 579.7 L529.1 572.9 L530.8 579.1 L532.9 572.1 L534.1 576.9 L535.2 568.9 L537.0 580.0 L538.4 570.0 L540.1 572.1 L541.3 581.1 L542.9 572.3 L544.8 578.8 L546.0 573.8 L547.6 531.1 L549.0 531.8 L550.2 532.0 L551.0 572.6 L552.2 575.3 L553.6 569.0 L555.2 569.4 L556.7 574.2 L558.1 566.5 L559.6 575.8 L560.6 564.4 L561.7 573.9 L562.6 569.0 L564.1 569.3 L565.4 577.8 L567.1 568.5 L568.4 574.6 L569.9 566.9 L571.4 573.9 L573.1 570.0 L574.7 575.1 L576.5 567.5 L578.5 575.4 L580.1 568.4 L582.0 577.7 L583.3 568.5 L584.5 576.2 L586.4 565.3 L588.3 568.4 L590.0 576.1 L591.6 568.9 L593.2 577.5 L594.6 569.3 L595.6 574.5 L597.3 566.9 L598.5 575.3 L600.1 565.9 L602.2 574.9 L604.0 566.0 L605.0 574.4 L606.7 573.4 L608.5 567.8 L610.0 574.8 L611.5 565.6 L613.2 575.6 L614.1 568.5 L615.6 572.9 L617.7 568.1 L618.5 571.3 L620.1 531.3 L621.5 530.9 L623.2 530.6 L624.0 573.2 L625.1 567.6 L626.6 568.6 L628.2 573.2 L629.9 563.3 L631.6 572.0 L633.3 567.9 L634.5 576.6 L635.9 568.1 L637.2 578.1 L639.1 564.5 L640.6 565.1 L642.6 574.9 L644.1 564.6 L645.8 573.4 L646.8 566.1 L648.3 572.6 L649.3 562.3 L651.1 574.8 L652.4 571.3 L653.5 566.5 L654.7 572.0 L655.6 565.7 L657.5 574.3 L658.5 567.5 L660.1 575.1 L661.1 565.9 L662.4 571.6 L663.5 564.4 L664.6 574.4 L666.3 568.9 L667.9 574.9 L669.7 564.1 L671.4 574.1 L672.3 567.9 L673.3 574.3 L675.3 567.1 L676.4 576.8 L677.6 564.1 L679.0 575.9 L680.2 567.5 L682.1 575.8 L683.7 568.6 L685.6 573.9 L687.3 574.0 L688.5 567.8 L689.8 577.3 L690.8 565.4 L693.0 570.2 L694.6 531.0 L696.0 531.3 L697.4 530.8 L698.2 531.0 L699.0 577.5 L700.6 578.8 L701.6 573.3 L703.2 579.9 L704.8 571.0 L706.1 582.1 L707.4 569.8 L709.0 582.1 L710.2 567.1 L711.1 575.4 L712.5 568.5 L714.4 582.1 L716.5 572.6 L718.2 580.2 L719.1 578.4 L720.4 568.2 L721.6 579.9 L722.8 568.1 L724.0 582.1 L725.1 566.7 L726.9 583.8 L727.9 572.8 L729.7 579.8 L730.9 567.2 L731.9 578.2 L733.4 572.9 L735.2 582.4 L736.8 565.9 L738.5 581.1 L739.7 570.8 L741.5 584.5 L742.5 570.2 L743.9 580.7 L745.0 567.6 L746.8 585.3 L748.4 571.2 L749.5 584.8 L751.0 567.9 L752.3 583.5 L754.2 574.6 L755.6 584.8 L756.5 570.2 L757.5 583.6 L759.3 571.8 L760.6 580.8 L762.3 570.3 L763.3 579.3 L764.8 572.2 L766.1 581.4 L768.0 573.0 L769.3 582.6 L770.4 572.9 L772.0 585.6 L773.0 575.9 L774.6 530.6 L776.0 531.0 L777.4 532.0 L779.2 531.3 L780.0 573.6 L781.5 568.9 L783.1 567.3 L785.1 570.3 L786.2 575.9 L788.0 567.6 L789.2 576.1 L790.4 569.6 L792.4 578.3 L793.9 568.9 L795.4 574.5 L797.0 566.5 L798.3 578.6 L800.2 569.7 L802.1 576.7 L804.0 565.9 L805.2 579.3 L806.3 570.1 L807.4 578.8 L809.0 566.9 L811.0 579.5 L812.7 567.2 L814.6 578.2 L815.8 578.8 L816.9 569.6 L818.8 579.6 L820.1 566.1 L821.9 581.0 L823.5 569.4 L825.5 580.6 L827.5 581.6 L829.6 567.5 L831.6 575.4 L832.8 570.4 L833.9 583.1 L835.3 568.9 L836.5 580.0 L837.8 578.6 L839.4 581.2 L840.8 570.5 L842.3 577.9 L844.3 571.5 L846.2 581.8 L847.2 568.5 L849.3 578.6 L851.0 579.4 L852.7 566.8 L853.5 572.0 L855.1 538.5 L856.5 538.2 L857.9 537.9 L859.2 538.5 L860.0 658.9 L862.0 650.2 L863.0 665.3 L864.9 654.6 L866.3 663.4 L867.7 652.0 L868.7 661.7 L870.3 660.4 L872.3 656.0 L873.6 663.7 L874.5 655.9 L876.1 658.4 L877.8 661.6 L879.8 653.6 L881.5 660.4 L883.2 652.7 L884.9 650.8 L886.3 658.0 L888.2 651.2 L889.6 651.0 L891.2 660.7 L892.2 657.0 L894.0 660.6 L895.3 652.4 L896.3 661.5 L898.3 653.4 L900.4 667.2 L902.2 654.1 L904.1 663.0 L905.7 652.0 L907.8 662.4 L909.5 650.9 L910.6 660.5 L912.6 650.5 L914.2 665.8 L915.5 650.7 L917.4 660.7 L918.8 653.6 L919.8 653.2 L921.8 661.4 L923.4 653.9 L924.4 664.0 L925.7 655.8 L926.7 654.7 L928.3 540.3 L929.7 540.7 L931.2 539.6 L932.0 655.2 L933.7 654.4 L935.6 662.8 L936.7 649.8 L938.2 662.2 L939.4 654.8 L940.4 662.9 L941.6 654.6 L943.5 652.5 L944.5 657.3 L946.1 661.1 L947.7 654.7 L949.1 654.9 L950.3 651.4 L951.5 660.3 L952.8 654.9 L954.3 663.3 L955.7 653.4 L957.0 663.9 L958.0 654.4 L959.6 661.0 L960.6 651.2 L962.0 658.8" fill="none" stroke="#14144e" stroke-width="1" stroke-linejoin="round" shape-rendering="crispEdges"/>
</g>
<rect x="0" y="348" width="954" height="1" fill="#7a7a7a"/>
<rect x="0" y="0" width="24" height="708" fill="#f0f0f0"/>
<rect x="23.6" y="0" width="1.5" height="707" fill="#c6c6ca"/>
<rect x="0" y="348" width="25" height="1" fill="#7a7a7a"/>
<g font-size="7.4" fill="#000" stroke="#000" stroke-width="0.18" text-anchor="end" opacity="0.99">
<text x="17.9" y="-0.2">100</text>
<rect x="20.2" y="-3" width="4.8" height="1" fill="#3c3c3c" stroke="none"/>
<text x="17.9" y="35.1">80</text>
<rect x="20.2" y="32" width="4.8" height="1" fill="#3c3c3c" stroke="none"/>
<text x="17.9" y="69.4">60</text>
<rect x="20.2" y="66" width="4.8" height="1" fill="#3c3c3c" stroke="none"/>
<text x="17.9" y="103.7">40</text>
<rect x="20.2" y="101" width="4.8" height="1" fill="#3c3c3c" stroke="none"/>
<text x="17.9" y="138.0">20</text>
<rect x="20.2" y="135" width="4.8" height="1" fill="#3c3c3c" stroke="none"/>
<text x="17.9" y="172.2">0</text>
<rect x="20.2" y="169" width="4.8" height="1" fill="#3c3c3c" stroke="none"/>
<text x="17.9" y="206.5">-20</text>
<rect x="20.2" y="203" width="4.8" height="1" fill="#3c3c3c" stroke="none"/>
<text x="17.9" y="240.8">-40</text>
<rect x="20.2" y="238" width="4.8" height="1" fill="#3c3c3c" stroke="none"/>
<text x="17.9" y="275.0">-60</text>
<rect x="20.2" y="272" width="4.8" height="1" fill="#3c3c3c" stroke="none"/>
<text x="17.9" y="309.1">-80</text>
<rect x="20.2" y="306" width="4.8" height="1" fill="#3c3c3c" stroke="none"/>
<text x="17.9" y="344.0">-100</text>
<rect x="20.2" y="341" width="4.8" height="1" fill="#3c3c3c" stroke="none"/>
<text x="17.9" y="357.6">100</text>
<rect x="20.2" y="354" width="4.8" height="1" fill="#3c3c3c" stroke="none"/>
<text x="17.9" y="392.9">80</text>
<rect x="20.2" y="390" width="4.8" height="1" fill="#3c3c3c" stroke="none"/>
<text x="17.9" y="427.3">60</text>
<rect x="20.2" y="424" width="4.8" height="1" fill="#3c3c3c" stroke="none"/>
<text x="17.9" y="461.8">40</text>
<rect x="20.2" y="459" width="4.8" height="1" fill="#3c3c3c" stroke="none"/>
<text x="17.9" y="496.3">20</text>
<rect x="20.2" y="493" width="4.8" height="1" fill="#3c3c3c" stroke="none"/>
<text x="17.9" y="530.8">0</text>
<rect x="20.2" y="528" width="4.8" height="1" fill="#3c3c3c" stroke="none"/>
<text x="17.9" y="565.2">-20</text>
<rect x="20.2" y="562" width="4.8" height="1" fill="#3c3c3c" stroke="none"/>
<text x="17.9" y="599.7">-40</text>
<rect x="20.2" y="597" width="4.8" height="1" fill="#3c3c3c" stroke="none"/>
<text x="17.9" y="634.2">-60</text>
<rect x="20.2" y="631" width="4.8" height="1" fill="#3c3c3c" stroke="none"/>
<text x="17.9" y="668.6">-80</text>
<rect x="20.2" y="666" width="4.8" height="1" fill="#3c3c3c" stroke="none"/>
<text x="17.9" y="703.1">-100</text>
<rect x="20.2" y="700" width="4.8" height="1" fill="#3c3c3c" stroke="none"/>
</g>
</svg>
<div class="abs" id="sbtrack"></div>
<div class="abs" id="tabbar"></div>

<!-- Normalize dialog (boxes) -->
<div class="abs" id="dlg">
  <div class="abs title"></div>
  <div class="abs body"></div>
  <div class="abs tbtn" style="left:187px;width:28px"><div class="abs" style="left:4px;top:6px;width:18px;height:1px;background:#c6c6c6"></div></div>
  <div class="abs tbtn" style="left:217px;width:27px"></div>
  <div class="abs" style="left:253px;top:4px;width:29px;height:15px;border:1px solid #909cb4;border-radius:2px;background:linear-gradient(#d3ddeb,#b9c7dc);box-shadow:inset 0 0 0 1px #e2e9f3"></div>
  <div class="abs" style="left:183px;top:22px;width:1px;height:170px;background:#6e6e6e"></div>
  <div class="abs grp"></div>
  <div class="abs" style="left:24px;top:30px;width:68px;height:14px;background:#f0f0f0"></div>
  <div class="abs" style="left:28px;top:53px;width:100px;height:18px;border:1px solid #b2b2b2;background:#e8d7ff"></div>
  <div class="abs" style="left:115px;top:54px;width:13px;height:16px;background:#f0f0f0;border-left:1px solid #d0d0d0"></div>
  <div class="abs" style="left:128px;top:54px;width:14px;height:16px;background:#e5f1fb;border-top:1px solid #3c90dd;border-bottom:1px solid #3c90dd"></div>
  <div class="abs" style="left:142px;top:53px;width:15px;height:18px;background:#e1e1e1;border:1px solid #b0b0b0"></div>
  <div class="abs cb" style="left:28px;top:79px"></div>
  <div class="abs cb" style="left:28px;top:111px"></div>
  <div class="abs cb" style="left:28px;top:128px"></div>
  <div class="abs btn" style="left:194px;top:131px;width:82px;height:19px"></div>
  <div class="abs btn" style="left:194px;top:162px;width:82px;height:19px"></div>
</div>

<!-- WaveLab message box (boxes) -->
<div class="abs" id="msg" style="left:553px;top:280px;width:153px;height:115px;border:1px solid #6e6e6e;background:#f0f0f0;box-shadow:1px 3px 12px rgba(0,0,0,0.36)">
  <div class="abs" style="left:0;top:0;width:151px;height:21px;background:#fff"></div>
  <div class="abs" style="left:37px;top:83px;width:77px;height:19px;border:2px solid #0078d7;background:#e1e1e1"></div>
</div>

<!-- UI text + icons, page coordinates -->
<svg id="ui" width="954" height="750" viewBox="0 0 954 750">
  <!-- scrollbar + tabs -->
  <rect x="7.2" y="707.8" width="803.8" height="13" fill="#cdcdcd"/>
  <path d="M2.6 711.2 L0.2 714 L2.6 716.8" fill="none" stroke="#222" stroke-width="1.3"/>
  <rect x="0" y="722.6" width="954" height="1" fill="#dcdcdc"/>
  <rect x="0" y="723.6" width="244.8" height="1.1" fill="#6a6a6a"/>
  <rect x="462.3" y="723.6" width="492" height="1.1" fill="#6a6a6a"/>
  <rect x="0" y="739.6" width="243.6" height="1.4" fill="#727272"/>
  <rect x="245.4" y="741.4" width="217.6" height="1.4" fill="#727272"/>
  <rect x="461.7" y="723.6" width="1.3" height="19.2" fill="#727272"/>
  <rect x="244.4" y="724.7" width="1" height="15" fill="#fbfbfb"/>
  <rect x="0" y="746.6" width="954" height="1" fill="#c8c8c8"/>
  <text x="15" y="735.8" font-size="9.2" fill="#000" textLength="206.5" lengthAdjust="spacingAndGlyphs">ИЗМЕРИТЕЛЬНАЯ 1СТ моя июня 2023г076.wav *</text>
  <text x="250.6" y="736.7" font-size="9.2" font-weight="bold" fill="#0000ff" textLength="206" lengthAdjust="spacingAndGlyphs">ИЗМ 33Д – 0102 1–1 СТ2 (AT440MLb).wav *</text>

  <!-- dialog icon -->
  <path d="M165.4 247.8 L176.4 253.6 L165.8 260.4 Z" fill="#c80e1e" stroke="#c80e1e" stroke-width="1.6" stroke-linejoin="round"/>
  <path d="M164.6 254.4 L167.8 258.6 L170.4 253.2 L172.7 257.4 L176.2 252.2" fill="none" stroke="#fff" stroke-width="1.6"/>
  <text x="181.6" y="258.6" font-size="10.8" fill="#9c9ca4" textLength="106.6" lengthAdjust="spacingAndGlyphs">Normalize Sound Level</text>
  <text x="388.2" y="258" font-size="11.5" fill="#cfcfcf">?</text>
  <!-- close X -->
  <path d="M424.2 251.4 L431.4 256.6 M431.4 251.4 L424.2 256.6" stroke="#fff" stroke-width="3.8" stroke-linecap="square"/>
  <path d="M424.4 251.6 L431.2 256.4 M431.2 251.6 L424.4 256.4" stroke="#565c6a" stroke-width="1.9" stroke-linecap="square"/>

  <text x="188.3" y="282.9" font-size="10" fill="#2850dc" textLength="61.2" lengthAdjust="spacingAndGlyphs">Maximum level</text>
  <text x="191.6" y="308.7" font-size="10.5" fill="#20205a" textLength="20.3" lengthAdjust="spacingAndGlyphs">0 <tspan fill="#a01fa2">dB</tspan></text>
  <!-- spin -->
  <g><rect x="276.3" y="305.5" width="11.2" height="6" fill="#ededed" stroke="#bdbdbd" stroke-width="0.7"/><path d="M278.8 302.7 L281.2 299.9 L283.6 302.7Z" fill="#7a7a7a"/><path d="M278.6 307 L281.2 309.9 L283.8 307Z" fill="#0a0a0a"/></g>
  <path d="M292.2 304.1 L295.7 307.5 L299.2 304.1" fill="none" stroke="#444" stroke-width="1.1"/>
  <g><rect x="306.7" y="300.5" width="5.3" height="8.6" fill="#ffff00" stroke="#1c1c1c" stroke-width="1"/><path d="M310 302.5 H312 M310.8 304.3 H312 M310 306 H312 M310.8 307.6 H312" stroke="#1c1c1c" stroke-width="0.9"/></g>

  <text x="202.4" y="331.6" font-size="10.5" fill="#111" textLength="48.4" lengthAdjust="spacingAndGlyphs">As selected</text>
  <path d="M191 358.6 L193.4 361.4 L198.2 355.4" fill="none" stroke="#222" stroke-width="1.2"/>
  <text x="202.8" y="362.7" font-size="10.5" fill="#111" textLength="47" lengthAdjust="spacingAndGlyphs">Stereo Link</text>
  <text x="202.6" y="380" font-size="10.5" fill="#111" textLength="50.6" lengthAdjust="spacingAndGlyphs">Mix to Mono</text>
  <text x="225.6" y="420.2" font-size="10.5" fill="#0a14ff" textLength="61.6" lengthAdjust="spacingAndGlyphs">Get peak level</text>
  <rect x="226" y="421.3" width="60.8" height="1" fill="#0a14ff"/>

  <!-- Apply -->
  <g transform="translate(364.3 382.8)"><g fill="#c9ae22" stroke="#5e4c06" stroke-width="0.5"><rect x="-1.3" y="-6" width="2.6" height="12"/><rect x="-1.3" y="-6" width="2.6" height="12" transform="rotate(45)"/><rect x="-1.3" y="-6" width="2.6" height="12" transform="rotate(90)"/><rect x="-1.3" y="-6" width="2.6" height="12" transform="rotate(135)"/></g><circle r="4.3" fill="#dcc22c" stroke="#5e4c06" stroke-width="0.5"/><circle r="1.6" fill="#efe6a0" stroke="#5e4c06" stroke-width="0.5"/><path d="M1.6 0 H5" stroke="#5e4c06" stroke-width="0.7"/></g>
  <text x="385.4" y="388.4" font-size="10.5" fill="#fff" textLength="23" lengthAdjust="spacingAndGlyphs">Apply</text>
  <text x="384.6" y="387.5" font-size="10.5" fill="#7d8296" textLength="23" lengthAdjust="spacingAndGlyphs">Apply</text>
  <!-- Close -->
  <g><rect x="359.6" y="408.5" width="6.2" height="8.4" fill="#fff3cf" stroke="#111" stroke-width="1"/><path d="M358 416.9 H368" stroke="#111" stroke-width="1"/><path d="M359.8 409.2 L363.4 410.8 L363.4 419.8 L359.8 417.6Z" fill="#dc9a22" stroke="#6a4208" stroke-width="0.6"/><path d="M372 412.6 H368 M369.6 410.9 L367.8 412.6 L369.6 414.3" fill="none" stroke="#c43c14" stroke-width="1"/></g>
  <text x="383.4" y="417.6" font-size="10.5" fill="#1c1c3c" textLength="24" lengthAdjust="spacingAndGlyphs">Close</text>

  <!-- message box -->
  <text x="556" y="294.6" font-size="11" fill="#1a1a2a" textLength="43" lengthAdjust="spacingAndGlyphs">WaveLab</text>
  <g>
    <path d="M577.6 313.4 C585.6 313.4 590.8 318 590.8 323.8 C590.8 329.6 586.6 333.6 581.8 334.4 L581.6 340.4 L576.2 334.6 C569.4 333.8 564.4 329.6 564.4 323.8 C564.4 318 569.6 313.4 577.6 313.4Z" fill="#8a8a8a" transform="translate(2 1.7)"/>
    <path d="M577.6 313.4 C585.6 313.4 590.8 318 590.8 323.8 C590.8 329.6 586.6 333.6 581.8 334.4 L581.6 340.4 L576.2 334.6 C569.4 333.8 564.4 329.6 564.4 323.8 C564.4 318 569.6 313.4 577.6 313.4Z" fill="#fff" stroke="#2a2a2a" stroke-width="0.9"/>
    <ellipse cx="577.5" cy="318.4" rx="2.7" ry="1.85" fill="#0000ff"/>
    <path d="M574 322 H580.2 V328.6 H582 V330 H574 V328.6 H576.4 V323.3 H574Z" fill="#0000ff"/>
  </g>
  <text x="602.6" y="325.9" font-size="10.5" fill="#151528" textLength="79" lengthAdjust="spacingAndGlyphs">The peak is <tspan fill="#4a32c8">-9.219</tspan></text>
  <text x="602.6" y="337" font-size="10.5" fill="#151528" textLength="11.8" lengthAdjust="spacingAndGlyphs">dB</text>
  <path d="M596 373 L600 378 L608.6 366.8" fill="none" stroke="#0a360a" stroke-width="3.6"/>
  <path d="M596.2 372.8 L600 377.2 L608.4 366.8" fill="none" stroke="#1cb81c" stroke-width="2.2"/>
  <text x="621.4" y="377" font-size="10.8" fill="#111" textLength="14.4" lengthAdjust="spacingAndGlyphs">OK</text>
  <rect x="622" y="378.4" width="6.6" height="1" fill="#111"/>
</svg>

<!-- annotations -->
<svg id="anno" width="954" height="750" viewBox="0 0 954 750">
  <defs>
    <filter id="sh" x="-20%" y="-20%" width="140%" height="140%"><feGaussianBlur in="SourceAlpha" stdDeviation="1.4"/><feOffset dx="1.5" dy="2.2"/><feComponentTransfer><feFuncA type="linear" slope="0.3"/></feComponentTransfer><feMerge><feMergeNode/><feMergeNode in="SourceGraphic"/></feMerge></filter>
  </defs>
  <g filter="url(#sh)" fill="#cb1e56" stroke="#cb1e56">
    <line x1="264" y1="410.7" x2="593" y2="343.5" stroke-width="2.5"/>
    <path d="M604.8 341 L591.7 337.7 L593.8 349.4 Z" stroke="none"/>
    <line x1="668" y1="311.8" x2="521.5" y2="194.2" stroke-width="2.6"/>
    <path d="M512.3 186.6 L525.9 189.2 L517.3 199.4 Z" stroke="none"/>
  </g>
  <g filter="url(#sh)" font-weight="bold" font-size="28.5" fill="#ea1458">
    <text x="464" y="59.2" textLength="87.5" lengthAdjust="spacingAndGlyphs" style="font-family:'Liberation Serif',serif">5000гц</text>
    <text x="466" y="93.5" textLength="83.5" lengthAdjust="spacingAndGlyphs" style="font-family:'Liberation Serif',serif">-9.2 дб</text>
  </g>
</svg>
</body>
</html>
